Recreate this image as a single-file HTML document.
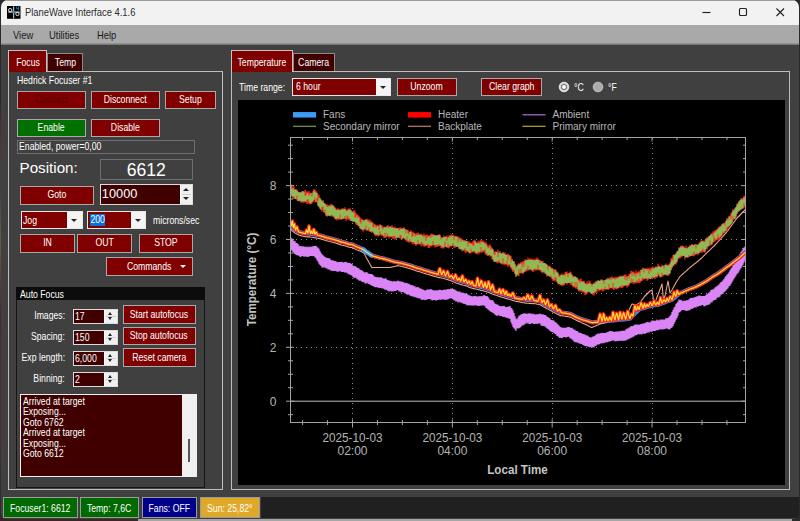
<!DOCTYPE html><html><head><meta charset="utf-8"><title>PlaneWave Interface 4.1.6</title><style>
*{box-sizing:border-box;margin:0;padding:0}
html,body{width:800px;height:521px;overflow:hidden;background:#2a2a2a}
body{font-family:"Liberation Sans",Arial,sans-serif;font-size:11px;color:#fff;position:relative}
.abs{position:absolute}
#win{position:absolute;left:1px;top:0;width:798px;height:519px;background:#404040;border-radius:7px 7px 5px 5px;overflow:hidden}
#title{position:absolute;left:0;top:0;width:100%;height:24.6px;background:#f3f2f2;color:#111}
#menu{position:absolute;left:0;top:24.6px;width:100%;height:20.4px;background:#a9a9a9;color:#1a1a1a}
.btn{position:absolute;background:#800000;border:1px solid #a9a9a9;padding-bottom:1.2px;color:#fff;text-align:center;display:flex;align-items:center;justify-content:center;white-space:nowrap}
.lbl{position:absolute;white-space:nowrap}
.tab{position:absolute;border:1px solid #bcbcbc;border-bottom:none;display:flex;align-items:center;justify-content:center;color:#fff}
.panel{position:absolute;border:1px solid #bdbdbd}
.num{position:absolute;background:#400000;border:1px solid #dcdcdc;color:#fff;white-space:nowrap}
.spin{position:absolute;right:0;top:0;bottom:0;background:#f0f0f0;border-left:1px solid #fff}
.spin:after{content:'';position:absolute;left:1px;right:1px;top:50%;height:1px;margin-top:-0.5px;background:#cfcfcf}
.combo{position:absolute;background:#800000;border:1px solid #e8e8e8;color:#fff;white-space:nowrap}
.dd{position:absolute;right:0;top:0;bottom:0;background:#f4f4f4}
.arr{position:absolute;width:0;height:0;border-left:3px solid transparent;border-right:3px solid transparent}
.up{border-bottom:3.5px solid #222}
.dn{border-top:3.5px solid #222}
.t{display:inline-block;transform:scaleX(0.79);transform-origin:50% 50%;white-space:nowrap}
.tl{display:inline-block;transform:scaleX(0.79);transform-origin:0 50%;white-space:nowrap}
.tr{display:inline-block;transform:scaleX(0.79);transform-origin:100% 50%;white-space:nowrap}
.sb{position:absolute;top:497px;height:21px;border:1px solid #9a9a9a;display:flex;align-items:center;justify-content:center;white-space:nowrap}
</style></head><body>
<div class="abs" style="left:0;top:0;width:3px;height:521px;background:linear-gradient(#2a2a2e 0,#2a2a2e 20%,#5a2a2a 24%,#3a4a3a 38%,#6a5a48 46%,#4a2a2a 60%,#503030 80%,#2a2a2a 100%)"></div>
<div class="abs" style="left:0;top:518px;width:140px;height:3px;background:#3a2626"></div>
<div class="abs" style="left:138px;top:519.4px;width:654px;height:1.6px;background:#a6a6a6"></div>
<div id="win">
<div id="title">
<div class="abs" style="left:0;top:0;width:100%;height:1px;background:#9a9a9a"></div>
<svg class="abs" style="left:6.1px;top:5.9px" width="13.5" height="12.8" viewBox="0 0 320 300" preserveAspectRatio="none"><rect width="320" height="300" fill="#000"/><g stroke="#fafafa" stroke-width="21" fill="none"><path d="M158 8V292M28 143H300"/><circle cx="76" cy="96" r="40"/><circle cx="248" cy="186" r="40"/></g><path d="M226 12V62H272M272 12V108" stroke="#1e9bf0" stroke-width="17" fill="none"/><circle cx="158" cy="141" r="30" fill="#2a8fe0"/></svg>
<div class="lbl" style="left:23.5px;top:5.8px;font-size:10.6px;color:#2c2c2c"><span class="tl" style="transform:scaleX(.887)">PlaneWave Interface 4.1.6</span></div>
<svg class="abs" style="left:700px;top:6px" width="90" height="12" viewBox="0 0 90 12" fill="none" stroke="#222" stroke-width="1.15"><path d="M1.5 6.5H9.5"/><rect x="38.5" y="2.5" width="7" height="7" rx="1"/><path d="M75.5 2.5l7.5 7.5M83 2.5l-7.5 7.5"/></svg>
</div>
<div id="menu">
<div class="lbl" style="left:12px;top:4.2px;font-size:10.6px"><span class="tl" style="transform:scaleX(.887)">View</span></div>
<div class="lbl" style="left:48px;top:4.2px;font-size:10.6px"><span class="tl" style="transform:scaleX(.887)">Utilities</span></div>
<div class="lbl" style="left:95.5px;top:4.2px;font-size:10.6px"><span class="tl" style="transform:scaleX(.887)">Help</span></div>
</div>
<div class="abs" style="left:0;top:43px;width:100%;height:2px;background:linear-gradient(#a0a0a0,#6a6a6a)"></div>
<div class="panel" style="left:7px;top:71px;width:215px;height:419px"></div>
<div class="tab" style="left:7px;top:50px;width:39px;height:22px;background:#800000;border-color:#c4c4c4"><span class="t">Focus</span></div>
<div class="tab" style="left:46px;top:52.5px;width:36px;height:18.5px;background:#400000;border-color:#8a8a8a"><span class="t">Temp</span></div>
<div class="lbl" style="left:15.5px;top:74px"><span class="tl">Hedrick Focuser #1</span></div>
<div class="btn" style="left:15.5px;top:90.5px;width:69px;height:18px;color:#5a0000"><span class="t">Connect</span></div>
<div class="btn" style="left:89.5px;top:90.5px;width:69px;height:18px;"><span class="t">Disconnect</span></div>
<div class="btn" style="left:164px;top:90.5px;width:51px;height:18px;"><span class="t">Setup</span></div>
<div class="btn" style="left:15.5px;top:119px;width:69px;height:18px;background:#007000"><span class="t">Enable</span></div>
<div class="btn" style="left:89.5px;top:119px;width:69px;height:18px;"><span class="t">Disable</span></div>
<div class="abs" style="left:15.5px;top:140px;width:178.5px;height:14px;border:1px solid #6e6e6e;padding:0 0 0 1.5px;line-height:11px;white-space:nowrap"><span class="tl">Enabled, power=0,00</span></div>
<div class="lbl" style="left:18.5px;top:158.5px;font-size:15.2px">Position:</div>
<div class="abs" style="left:98.5px;top:158.5px;width:93.5px;height:21.5px;border:1px solid #6e6e6e;text-align:center;font-size:17.6px;line-height:21px">6612</div>
<div class="btn" style="left:19px;top:185.5px;width:73.5px;height:19px;"><span class="t">Goto</span></div>
<div class="num" style="left:98.5px;top:183.5px;width:93.5px;height:21px;font-size:12.8px;line-height:18.5px;padding-left:1.3px">10000<div class="spin" style="width:12.5px"><div class="arr up" style="left:2.65px;top:21%;border-left-width:3.1px;border-right-width:3.1px;border-bottom-width:3.4px"></div><div class="arr dn" style="left:2.65px;bottom:21%;border-left-width:3.1px;border-right-width:3.1px;border-top-width:3.4px"></div></div></div>
<div class="combo" style="left:19.5px;top:211px;width:62px;height:17.5px;line-height:16.6px;padding-left:1.5px"><span class="tl">Jog</span><div class="dd" style="width:14.5px"><div class="arr dn" style="left:4.25px;top:42%"></div></div></div>
<div class="combo" style="left:86px;top:211px;width:59px;height:17.5px;line-height:16.6px;padding-left:2px"><span class="tl"><span style="background:#0a6fd8;display:inline-block;height:11.6px;line-height:11.6px;padding:0 0.5px;vertical-align:middle;margin-top:-2.5px">200</span></span><div class="dd" style="width:14.5px"><div class="arr dn" style="left:4.25px;top:42%"></div></div></div>
<div class="lbl" style="left:151.5px;top:214px"><span class="tl">microns/sec</span></div>
<div class="btn" style="left:19px;top:233.5px;width:54.5px;height:19px;"><span class="t">IN</span></div>
<div class="btn" style="left:76px;top:233.5px;width:55px;height:19px;"><span class="t">OUT</span></div>
<div class="btn" style="left:138px;top:233.5px;width:54px;height:19px;"><span class="t">STOP</span></div>
<div class="btn" style="left:105px;top:257px;width:86.5px;height:18.5px"><span class="t">Commands</span><span class="arr dn" style="left:72.5px;top:6.5px;border-top-color:#fff;border-left-width:3px;border-right-width:3px;border-top-width:3.5px"></span></div>
<div class="abs" style="left:15px;top:286.5px;width:189px;height:201px;border:1.5px solid #161616"></div>
<div class="abs" style="left:15px;top:286.5px;width:189px;height:13.5px;background:#0c0c0c;padding:1.5px 0 0 3.5px;white-space:nowrap"><span class="tl">Auto Focus</span></div>
<div class="lbl" style="left:9px;width:55px;text-align:right;top:309.3px"><span class="tr">Images:</span></div>
<div class="num" style="left:71.5px;top:308.5px;width:45px;height:15.5px;line-height:12px;padding-left:1.5px"><span class="tl">17</span><div class="spin" style="width:13px"><div class="arr up" style="left:3.4px;top:21%;border-left-width:2.6px;border-right-width:2.6px;border-bottom-width:3px"></div><div class="arr dn" style="left:3.4px;bottom:21%;border-left-width:2.6px;border-right-width:2.6px;border-top-width:3px"></div></div></div>
<div class="btn" style="left:121.5px;top:305px;width:73px;height:18.5px;"><span class="t">Start autofocus</span></div>
<div class="lbl" style="left:9px;width:55px;text-align:right;top:330.3px"><span class="tr">Spacing:</span></div>
<div class="num" style="left:71.5px;top:329.5px;width:45px;height:15.5px;line-height:12px;padding-left:1.5px"><span class="tl">150</span><div class="spin" style="width:13px"><div class="arr up" style="left:3.4px;top:21%;border-left-width:2.6px;border-right-width:2.6px;border-bottom-width:3px"></div><div class="arr dn" style="left:3.4px;bottom:21%;border-left-width:2.6px;border-right-width:2.6px;border-top-width:3px"></div></div></div>
<div class="btn" style="left:121.5px;top:326.7px;width:73px;height:18.5px;"><span class="t">Stop autofocus</span></div>
<div class="lbl" style="left:9px;width:55px;text-align:right;top:351.3px"><span class="tr">Exp length:</span></div>
<div class="num" style="left:71.5px;top:350.5px;width:45px;height:15.5px;line-height:12px;padding-left:1.5px"><span class="tl">6,000</span><div class="spin" style="width:13px"><div class="arr up" style="left:3.4px;top:21%;border-left-width:2.6px;border-right-width:2.6px;border-bottom-width:3px"></div><div class="arr dn" style="left:3.4px;bottom:21%;border-left-width:2.6px;border-right-width:2.6px;border-top-width:3px"></div></div></div>
<div class="btn" style="left:121.5px;top:348.2px;width:73px;height:18.5px;"><span class="t">Reset camera</span></div>
<div class="lbl" style="left:9px;width:55px;text-align:right;top:372.3px"><span class="tr">Binning:</span></div>
<div class="num" style="left:71.5px;top:371.5px;width:45px;height:15.5px;line-height:12px;padding-left:1.5px"><span class="tl">2</span><div class="spin" style="width:13px"><div class="arr up" style="left:3.4px;top:21%;border-left-width:2.6px;border-right-width:2.6px;border-bottom-width:3px"></div><div class="arr dn" style="left:3.4px;bottom:21%;border-left-width:2.6px;border-right-width:2.6px;border-top-width:3px"></div></div></div>
<div class="abs" style="left:19px;top:393.5px;width:177px;height:83.5px;background:#400000;border:1px solid #f0f0f0;line-height:10.55px;padding:1.2px 0 0 1.5px"><div><span class="tl">Arrived at target</span></div><div><span class="tl">Exposing...</span></div><div><span class="tl">Goto 6762</span></div><div><span class="tl">Arrived at target</span></div><div><span class="tl">Exposing...</span></div><div><span class="tl">Goto 6612</span></div><div class="abs" style="right:0;top:0;bottom:0;width:14px;background:#f0f0f0"><div class="abs" style="left:6px;top:44px;width:1.5px;height:23px;background:#555"></div></div></div>
<div class="panel" style="left:229.5px;top:71px;width:559.5px;height:419px"></div>
<div class="tab" style="left:229.5px;top:50px;width:62.5px;height:22px;background:#800000;border-color:#c4c4c4"><span class="t">Temperature</span></div>
<div class="tab" style="left:292px;top:52.5px;width:41.5px;height:18.5px;background:#400000;border-color:#8a8a8a"><span class="t">Camera</span></div>
<div class="lbl" style="left:237.5px;top:81px"><span class="tl">Time range:</span></div>
<div class="combo" style="left:291px;top:78px;width:99px;height:17.5px;line-height:15.5px;padding-left:3px"><span class="tl">6 hour</span><div class="dd" style="width:14.5px"><div class="arr dn" style="left:4.25px;top:42%"></div></div></div>
<div class="btn" style="left:395.5px;top:78px;width:60.5px;height:18px;"><span class="t">Unzoom</span></div>
<div class="btn" style="left:480px;top:78px;width:61px;height:18px;"><span class="t">Clear graph</span></div>
<svg class="abs" style="left:557px;top:81px" width="12" height="12" viewBox="0 0 12 12"><circle cx="6" cy="6" r="4.8" fill="#d6d6d6" stroke="#f2f2f2" stroke-width="0.9"/><circle cx="6" cy="6" r="2.7" fill="none" stroke="#777" stroke-width="1"/><circle cx="6" cy="6" r="1.4" fill="#fff"/></svg>
<div class="lbl" style="left:572.5px;top:81px"><span class="tl">°C</span></div>
<svg class="abs" style="left:590.8px;top:81px" width="12" height="12" viewBox="0 0 12 12"><circle cx="6" cy="6" r="4.8" fill="#acacac" stroke="#c8c8c8" stroke-width="0.9"/></svg>
<div class="lbl" style="left:607px;top:81px"><span class="tl">°F</span></div>
<svg width="547" height="385" viewBox="0 0 547 385" style="position:absolute;left:237px;top:100px;display:block" font-family="Liberation Sans, Arial, sans-serif">
<rect width="547" height="385" fill="#000"/>
<defs><clipPath id="cp"><rect x="52.5" y="37.5" width="455.0" height="285.0"/></clipPath></defs>
<line x1="52.5" x2="507.5" y1="247.30" y2="247.30" stroke="#8c8c8c" stroke-width="1" stroke-dasharray="1 4" shape-rendering="crispEdges"/>
<line x1="52.5" x2="507.5" y1="193.40" y2="193.40" stroke="#8c8c8c" stroke-width="1" stroke-dasharray="1 4" shape-rendering="crispEdges"/>
<line x1="52.5" x2="507.5" y1="139.50" y2="139.50" stroke="#8c8c8c" stroke-width="1" stroke-dasharray="1 4" shape-rendering="crispEdges"/>
<line x1="52.5" x2="507.5" y1="85.60" y2="85.60" stroke="#8c8c8c" stroke-width="1" stroke-dasharray="1 4" shape-rendering="crispEdges"/>
<line x1="114.50" x2="114.50" y1="37.5" y2="322.5" stroke="#8c8c8c" stroke-width="1" stroke-dasharray="1 4" shape-rendering="crispEdges"/>
<line x1="214.35" x2="214.35" y1="37.5" y2="322.5" stroke="#8c8c8c" stroke-width="1" stroke-dasharray="1 4" shape-rendering="crispEdges"/>
<line x1="314.20" x2="314.20" y1="37.5" y2="322.5" stroke="#8c8c8c" stroke-width="1" stroke-dasharray="1 4" shape-rendering="crispEdges"/>
<line x1="414.05" x2="414.05" y1="37.5" y2="322.5" stroke="#8c8c8c" stroke-width="1" stroke-dasharray="1 4" shape-rendering="crispEdges"/>
<line x1="52.5" x2="507.5" y1="301.2" y2="301.2" stroke="#bdbdbd" stroke-width="1"/>
<g clip-path="url(#cp)" fill="none">
<path d="M52.0 137.0V148.1M53.0 137.6V149.7M54.0 138.6V150.8M55.0 139.2V152.1M56.0 141.2V153.6M57.0 141.0V154.1M58.0 143.0V154.8M59.0 142.9V155.2M60.0 144.1V155.4M61.0 145.4V155.8M62.0 146.3V156.7M63.0 146.1V156.9M64.0 146.4V155.9M65.0 146.3V155.9M66.0 146.4V156.9M67.0 147.1V156.2M68.0 146.5V156.5M69.0 147.3V157.0M70.0 146.5V156.7M71.0 147.2V156.7M72.0 146.4V156.1M73.0 146.9V155.9M74.0 146.6V156.1M75.0 146.2V156.2M76.0 145.9V156.1M77.0 146.0V157.5M78.0 145.7V158.2M79.0 146.7V160.3M80.0 147.8V161.8M81.0 148.8V163.8M82.0 151.0V165.1M83.0 152.7V166.0M84.0 154.3V167.8M85.0 155.2V167.2M86.0 156.2V167.5M87.0 157.1V167.5M88.0 157.6V168.4M89.0 157.9V168.2M90.0 158.0V169.4M91.0 158.4V169.4M92.0 158.4V169.7M93.0 159.9V170.9M94.0 160.5V170.6M95.0 160.3V171.1M96.0 161.1V171.1M97.0 161.0V170.8M98.0 161.3V171.1M99.0 162.3V171.8M100.0 162.0V171.7M101.0 161.9V171.4M102.0 161.9V170.8M103.0 161.9V171.7M104.0 161.7V171.9M105.0 162.5V172.1M106.0 162.3V172.1M107.0 161.9V172.7M108.0 161.7V172.3M109.0 162.7V172.9M110.0 162.5V173.8M111.0 163.0V174.3M112.0 163.1V174.7M113.0 163.7V175.1M114.0 164.1V175.7M115.0 165.8V177.1M116.0 165.7V178.2M117.0 166.3V177.6M118.0 166.8V178.1M119.0 167.6V179.2M120.0 167.9V179.6M121.0 168.6V180.6M122.0 169.8V180.7M123.0 169.9V180.8M124.0 170.5V182.1M125.0 171.3V182.2M126.0 171.9V182.0M127.0 172.9V183.4M128.0 171.9V183.4M129.0 172.3V182.8M130.0 173.5V183.8M131.0 173.7V183.9M132.0 174.0V184.5M133.0 174.0V185.3M134.0 174.0V185.7M135.0 175.1V186.1M136.0 176.3V186.7M137.0 176.8V187.2M138.0 177.0V187.2M139.0 177.4V187.3M140.0 176.9V187.5M141.0 177.5V187.9M142.0 177.4V188.0M143.0 177.1V187.7M144.0 178.1V188.5M145.0 178.6V188.3M146.0 178.6V188.9M147.0 178.6V189.8M148.0 178.2V189.8M149.0 179.8V190.1M150.0 179.9V190.9M151.0 180.8V191.4M152.0 180.6V190.8M153.0 181.1V191.5M154.0 181.4V191.2M155.0 181.6V191.4M156.0 181.1V190.7M157.0 181.5V190.9M158.0 181.3V191.1M159.0 181.3V190.0M160.0 180.6V190.3M161.0 181.0V191.4M162.0 181.8V191.3M163.0 181.3V192.4M164.0 181.9V192.2M165.0 181.8V192.0M166.0 182.5V192.6M167.0 183.2V193.6M168.0 182.7V193.8M169.0 183.1V194.7M170.0 183.7V194.2M171.0 183.7V194.8M172.0 184.6V195.5M173.0 185.2V196.1M174.0 185.1V196.4M175.0 185.6V196.2M176.0 186.3V197.3M177.0 186.2V196.7M178.0 187.4V197.5M179.0 187.1V197.8M180.0 187.0V197.9M181.0 187.7V198.6M182.0 188.6V198.2M183.0 188.5V199.6M184.0 189.3V200.0M185.0 189.6V199.8M186.0 189.9V199.6M187.0 190.7V200.3M188.0 190.3V199.7M189.0 189.6V199.8M190.0 189.4V199.0M191.0 189.6V198.9M192.0 189.5V199.2M193.0 188.9V199.4M194.0 189.7V200.6M195.0 190.3V200.3M196.0 190.3V200.1M197.0 190.7V200.1M198.0 190.3V200.8M199.0 190.3V200.0M200.0 190.5V200.1M201.0 189.7V199.5M202.0 189.8V199.7M203.0 190.1V199.7M204.0 190.4V199.4M205.0 190.1V199.4M206.0 189.5V199.2M207.0 189.9V199.9M208.0 189.4V199.5M209.0 189.5V199.7M210.0 188.9V199.3M211.0 189.6V198.8M212.0 189.1V198.4M213.0 188.6V198.2M214.0 188.9V198.5M215.0 189.1V199.2M216.0 189.3V200.5M217.0 189.8V200.5M218.0 190.5V201.6M219.0 190.9V201.2M220.0 191.7V202.4M221.0 191.4V201.7M222.0 191.5V202.3M223.0 192.5V202.8M224.0 192.8V202.7M225.0 192.6V203.7M226.0 193.3V203.8M227.0 193.6V204.1M228.0 193.3V204.5M229.0 193.9V205.2M230.0 194.8V205.4M231.0 195.3V205.3M232.0 195.6V205.3M233.0 196.1V205.7M234.0 196.4V205.1M235.0 196.2V205.8M236.0 196.1V205.5M237.0 195.8V205.3M238.0 196.3V205.2M239.0 196.6V205.7M240.0 196.2V205.8M241.0 196.4V206.0M242.0 196.1V205.6M243.0 196.2V205.8M244.0 196.2V205.6M245.0 195.7V205.2M246.0 195.0V205.6M247.0 195.6V206.2M248.0 196.0V208.1M249.0 196.0V208.5M250.0 196.7V209.4M251.0 198.4V210.2M252.0 199.8V211.0M253.0 200.2V212.0M254.0 199.9V212.3M255.0 200.6V213.1M256.0 202.2V213.5M257.0 203.8V214.7M258.0 203.8V215.3M259.0 204.7V216.0M260.0 204.5V214.9M261.0 205.7V215.4M262.0 206.2V215.9M263.0 206.0V215.9M264.0 206.4V216.3M265.0 206.0V216.9M266.0 205.8V216.8M267.0 206.6V217.2M268.0 207.2V217.7M269.0 207.0V217.8M270.0 206.6V218.3M271.0 206.8V218.6M272.0 206.1V219.1M273.0 207.8V222.2M274.0 208.6V224.4M275.0 210.6V226.9M276.0 213.0V228.3M277.0 216.3V229.6M278.0 218.6V230.9M279.0 219.3V228.6M280.0 217.6V228.5M281.0 215.8V228.3M282.0 215.2V227.8M283.0 214.5V226.7M284.0 214.1V225.4M285.0 213.8V225.5M286.0 213.3V224.8M287.0 213.6V224.2M288.0 213.4V222.7M289.0 214.1V223.7M290.0 213.6V222.7M291.0 213.2V223.9M292.0 213.5V224.1M293.0 213.7V223.7M294.0 213.6V223.2M295.0 214.3V223.4M296.0 213.7V223.9M297.0 214.2V224.0M298.0 214.9V223.4M299.0 214.1V224.1M300.0 214.4V223.6M301.0 213.9V223.6M302.0 213.6V223.4M303.0 213.9V225.2M304.0 214.8V225.9M305.0 214.3V225.8M306.0 214.7V226.3M307.0 215.0V226.6M308.0 215.6V227.6M309.0 216.8V228.2M310.0 217.0V229.3M311.0 217.9V229.5M312.0 218.5V231.1M313.0 220.0V231.6M314.0 219.9V232.0M315.0 220.6V232.3M316.0 220.6V232.9M317.0 222.1V234.1M318.0 222.6V234.4M319.0 223.5V235.9M320.0 224.4V236.5M321.0 225.6V237.6M322.0 226.8V238.1M323.0 227.3V237.8M324.0 227.5V238.2M325.0 227.9V237.6M326.0 227.5V236.9M327.0 228.1V236.9M328.0 227.7V237.8M329.0 227.3V237.1M330.0 227.0V236.8M331.0 226.9V236.8M332.0 227.5V238.2M333.0 228.0V238.6M334.0 227.8V239.2M335.0 228.8V240.5M336.0 229.7V241.6M337.0 229.8V242.2M338.0 231.0V242.2M339.0 231.0V242.4M340.0 231.7V242.8M341.0 232.8V243.4M342.0 232.8V243.6M343.0 232.9V244.0M344.0 233.8V244.2M345.0 234.1V244.9M346.0 234.3V245.6M347.0 234.5V246.0M348.0 235.2V246.2M349.0 235.5V246.2M350.0 235.8V246.4M351.0 236.9V247.0M352.0 237.2V247.2M353.0 237.8V246.7M354.0 237.0V247.6M355.0 236.5V247.3M356.0 236.3V247.4M357.0 235.7V246.0M358.0 234.6V246.0M359.0 234.3V244.7M360.0 233.5V244.6M361.0 233.4V244.4M362.0 233.8V243.9M363.0 233.1V243.0M364.0 232.8V243.6M365.0 233.1V242.9M366.0 232.9V243.2M367.0 233.1V242.5M368.0 232.7V242.6M369.0 232.3V242.3M370.0 231.7V242.0M371.0 231.4V241.4M372.0 231.0V241.6M373.0 231.0V240.9M374.0 231.6V240.7M375.0 231.2V240.6M376.0 231.9V240.6M377.0 231.9V241.6M378.0 231.3V240.9M379.0 231.9V241.2M380.0 231.2V240.7M381.0 231.2V240.9M382.0 231.4V240.7M383.0 230.7V240.8M384.0 231.1V240.5M385.0 230.5V240.9M386.0 230.9V240.4M387.0 230.5V240.8M388.0 229.2V240.4M389.0 228.5V239.5M390.0 228.5V239.4M391.0 227.6V238.7M392.0 227.3V238.4M393.0 225.9V237.8M394.0 226.2V237.4M395.0 226.1V236.7M396.0 225.3V236.5M397.0 224.6V235.5M398.0 224.5V235.3M399.0 224.8V235.1M400.0 224.4V233.9M401.0 224.7V234.3M402.0 224.6V234.5M403.0 223.9V234.0M404.0 223.8V234.4M405.0 223.4V233.6M406.0 223.5V233.8M407.0 222.8V234.1M408.0 222.8V233.1M409.0 221.9V232.8M410.0 221.8V232.4M411.0 222.4V232.6M412.0 222.2V231.6M413.0 221.6V231.8M414.0 220.6V231.8M415.0 220.8V231.1M416.0 220.6V231.0M417.0 221.1V231.0M418.0 220.4V230.4M419.0 219.5V229.9M420.0 220.2V230.3M421.0 220.5V229.8M422.0 219.6V229.2M423.0 219.6V229.3M424.0 219.5V229.5M425.0 219.4V229.4M426.0 219.5V228.9M427.0 219.5V229.2M428.0 218.1V228.4M429.0 218.4V228.6M430.0 218.0V228.9M431.0 217.2V229.5M432.0 216.1V229.3M433.0 214.5V228.1M434.0 212.1V227.4M435.0 209.9V226.2M436.0 207.8V224.0M437.0 206.4V221.9M438.0 204.1V219.7M439.0 202.7V217.9M440.0 201.5V215.8M441.0 199.5V212.5M442.0 199.9V212.2M443.0 199.8V210.9M444.0 200.8V209.9M445.0 201.3V210.1M446.0 200.4V209.9M447.0 200.9V210.5M448.0 200.6V210.7M449.0 200.1V210.9M450.0 200.4V210.3M451.0 199.2V210.4M452.0 198.4V209.9M453.0 197.8V208.8M454.0 198.1V209.0M455.0 197.8V208.2M456.0 197.8V207.8M457.0 197.0V207.0M458.0 196.8V207.7M459.0 196.2V206.3M460.0 196.3V206.7M461.0 195.6V206.0M462.0 195.4V205.8M463.0 196.2V205.7M464.0 196.1V205.1M465.0 196.0V205.1M466.0 196.1V206.4M467.0 196.1V206.0M468.0 194.7V205.5M469.0 194.2V205.1M470.0 193.6V204.7M471.0 192.4V204.8M472.0 191.8V203.8M473.0 190.1V202.3M474.0 189.5V202.5M475.0 189.4V201.1M476.0 188.8V200.0M477.0 187.5V199.9M478.0 186.7V199.4M479.0 186.2V197.8M480.0 185.2V197.6M481.0 184.4V197.2M482.0 183.2V196.4M483.0 182.0V194.7M484.0 181.6V194.3M485.0 180.2V193.8M486.0 179.1V192.3M487.0 177.3V191.4M488.0 175.9V190.4M489.0 174.8V189.3M490.0 173.7V188.2M491.0 172.2V186.3M492.0 170.2V185.7M493.0 168.4V184.0M494.0 167.4V182.2M495.0 165.3V180.5M496.0 164.4V178.8M497.0 162.4V177.3M498.0 160.3V175.7M499.0 158.6V174.1M500.0 157.8V172.9M501.0 155.8V171.4M502.0 154.1V169.5M503.0 152.0V168.3M504.0 150.4V166.5M505.0 148.0V164.7M506.0 147.6V162.4M507.0 146.6V160.2M508.0 145.2V158.0" stroke="#da84f6" stroke-width="1.25"/>
<polyline points="52.0,125.9 52.5,126.4 53.0,126.8 53.5,127.2 54.0,127.7 54.5,128.1 55.0,128.5 55.5,128.8 56.0,129.2 56.5,129.6 57.0,130.1 57.5,130.4 58.0,130.6 58.5,130.9 59.0,131.1 59.5,131.3 60.0,131.5 60.5,131.8 61.0,132.0 61.5,132.2 62.0,132.4 62.5,132.5 63.0,132.6 63.5,132.7 64.0,132.9 64.5,133.0 65.0,133.1 65.5,133.3 66.0,133.4 66.5,133.5 67.0,133.6 67.5,133.7 68.0,133.8 68.5,133.8 69.0,133.9 69.5,133.9 70.0,133.9 70.5,133.9 71.0,133.9 71.5,133.9 72.0,133.9 72.5,134.1 73.0,134.2 73.5,134.2 74.0,134.2 74.5,134.3 75.0,134.4 75.5,134.5 76.0,134.7 76.5,134.8 77.0,134.9 77.5,134.9 78.0,134.9 78.5,135.0 79.0,135.2 79.5,135.3 80.0,135.4 80.5,135.5 81.0,135.5 81.5,135.6 82.0,135.6 82.5,135.8 83.0,136.0 83.5,136.1 84.0,136.2 84.5,136.4 85.0,136.5 85.5,136.7 86.0,136.9 86.5,137.1 87.0,137.3 87.5,137.4 88.0,137.6 88.5,137.7 89.0,137.9 89.5,138.0 90.0,138.0 90.5,138.2 91.0,138.3 91.5,138.4 92.0,138.6 92.5,138.7 93.0,138.8 93.5,138.9 94.0,139.0 94.5,139.2 95.0,139.4 95.5,139.5 96.0,139.6 96.5,139.7 97.0,139.9 97.5,140.0 98.0,140.2 98.5,140.3 99.0,140.5 99.5,140.6 100.0,140.8 100.5,141.0 101.0,141.3 101.5,141.4 102.0,141.6 102.5,141.8 103.0,141.9 103.5,142.1 104.0,142.2 104.5,142.3 105.0,142.4 105.5,142.5 106.0,142.6 106.5,142.7 107.0,142.8 107.5,143.0 108.0,143.1 108.5,143.3 109.0,143.5 109.5,143.7 110.0,143.9 110.5,144.1 111.0,144.3 111.5,144.3 112.0,144.4 112.5,144.4 113.0,144.4 113.5,144.5 114.0,144.5 114.5,144.8 115.0,145.0 115.5,145.2 116.0,145.5 116.5,145.7 117.0,146.0 117.5,146.2 118.0,146.5 118.5,146.7 119.0,147.0 119.5,147.2 120.0,147.3 120.5,147.5 121.0,147.6 121.5,147.9 122.0,148.1 122.5,148.3 123.0,148.6 123.5,148.8 124.0,149.0 124.5,149.2 125.0,149.5 125.5,149.8 126.0,150.0 126.5,150.5 127.0,150.9 127.5,151.3 128.0,151.7 128.5,152.1 129.0,152.4 129.5,152.8 130.0,153.1 130.5,153.4 131.0,153.8 131.5,154.1 132.0,154.5 132.5,154.8 133.0,155.1 133.5,155.4 134.0,155.8 134.5,156.0 135.0,156.2 135.5,156.2 136.0,156.3 136.5,156.4 137.0,156.6 137.5,156.8 138.0,156.9 138.5,157.1 139.0,157.3 139.5,157.3 140.0,157.4 140.5,157.6 141.0,157.8 141.5,158.0 142.0,158.2 142.5,158.2 143.0,158.3 143.5,158.3 144.0,158.3 144.5,158.5 145.0,158.8 145.5,158.8 146.0,158.9 146.5,159.0 147.0,159.1 147.5,159.3 148.0,159.5 148.5,159.6 149.0,159.8 149.5,159.9 150.0,160.0 150.5,160.2 151.0,160.3 151.5,160.5 152.0,160.6 152.5,160.8 153.0,161.0 153.5,161.2 154.0,161.3 154.5,161.5 155.0,161.6 155.5,161.7 156.0,161.8 156.5,162.0 157.0,162.2 157.5,162.2 158.0,162.3 158.5,162.4 159.0,162.5 159.5,162.6 160.0,162.6 160.5,162.8 161.0,163.0 161.5,163.0 162.0,163.0 162.5,163.1 163.0,163.2 163.5,163.3 164.0,163.4 164.5,163.6 165.0,163.7 165.5,163.9 166.0,164.0 166.5,164.1 167.0,164.2 167.5,164.4 168.0,164.5 168.5,164.7 169.0,164.9 169.5,165.0 170.0,165.1 170.5,165.2 171.0,165.4 171.5,165.5 172.0,165.7 172.5,165.8 173.0,166.0 173.5,166.1 174.0,166.3 174.5,166.5 175.0,166.6 175.5,166.9 176.0,167.1 176.5,167.3 177.0,167.5 177.5,167.7 178.0,167.8 178.5,167.9 179.0,168.1 179.5,168.2 180.0,168.4 180.5,168.5 181.0,168.6 181.5,168.7 182.0,168.8 182.5,169.0 183.0,169.2 183.5,169.3 184.0,169.5 184.5,169.7 185.0,169.9 185.5,170.1 186.0,170.2 186.5,170.4 187.0,170.5 187.5,170.7 188.0,170.9 188.5,171.0 189.0,171.2 189.5,171.2 190.0,171.2 190.5,171.5 191.0,171.7 191.5,171.9 192.0,172.0 192.5,172.2 193.0,172.4 193.5,172.5 194.0,172.6 194.5,172.8 195.0,173.0 195.5,173.1 196.0,173.2 196.5,173.4 197.0,173.6 197.5,173.7 198.0,173.8 198.5,173.9 199.0,174.0 199.5,174.2 200.0,174.4 200.5,174.5 201.0,174.6 201.5,174.6 202.0,174.7 202.5,174.8 203.0,174.9 203.5,175.0 204.0,175.2 204.5,175.2 205.0,175.3 205.5,175.4 206.0,175.6 206.5,175.7 207.0,175.8 207.5,176.0 208.0,176.2 208.5,176.3 209.0,176.5 209.5,176.6 210.0,176.8 210.5,176.9 211.0,177.1 211.5,177.2 212.0,177.4 212.5,177.6 213.0,177.8 213.5,178.0 214.0,178.2 214.5,178.5 215.0,178.7 215.5,178.9 216.0,179.1 216.5,179.3 217.0,179.5 217.5,179.7 218.0,179.9 218.5,180.1 219.0,180.2 219.5,180.4 220.0,180.5 220.5,180.7 221.0,180.9 221.5,181.1 222.0,181.3 222.5,181.5 223.0,181.6 223.5,181.7 224.0,181.8 224.5,182.0 225.0,182.2 225.5,182.2 226.0,182.2 226.5,182.4 227.0,182.5 227.5,182.6 228.0,182.7 228.5,183.0 229.0,183.3 229.5,183.4 230.0,183.6 230.5,184.0 231.0,184.3 231.5,184.4 232.0,184.6 232.5,184.7 233.0,184.9 233.5,185.0 234.0,185.2 234.5,185.3 235.0,185.5 235.5,185.6 236.0,185.6 236.5,185.8 237.0,185.9 237.5,186.0 238.0,186.0 238.5,186.2 239.0,186.3 239.5,186.4 240.0,186.6 240.5,186.7 241.0,186.8 241.5,186.9 242.0,187.1 242.5,187.3 243.0,187.5 243.5,187.5 244.0,187.6 244.5,187.7 245.0,187.8 245.5,187.9 246.0,188.0 246.5,188.1 247.0,188.2 247.5,188.4 248.0,188.5 248.5,188.7 249.0,188.9 249.5,189.1 250.0,189.2 250.5,189.4 251.0,189.6 251.5,189.8 252.0,190.0 252.5,190.2 253.0,190.4 253.5,190.7 254.0,190.9 254.5,191.1 255.0,191.3 255.5,191.5 256.0,191.6 256.5,191.7 257.0,191.9 257.5,192.0 258.0,192.2 258.5,192.3 259.0,192.5 259.5,192.7 260.0,192.9 260.5,193.1 261.0,193.2 261.5,193.4 262.0,193.6 262.5,193.8 263.0,194.0 263.5,194.1 264.0,194.2 264.5,194.3 265.0,194.5 265.5,194.6 266.0,194.8 266.5,195.0 267.0,195.2 267.5,195.3 268.0,195.5 268.5,195.6 269.0,195.8 269.5,195.9 270.0,196.0 270.5,196.2 271.0,196.3 271.5,196.4 272.0,196.5 272.5,196.7 273.0,196.8 273.5,196.9 274.0,197.1 274.5,197.2 275.0,197.4 275.5,197.6 276.0,197.7 276.5,197.9 277.0,198.1 277.5,198.2 278.0,198.2 278.5,198.4 279.0,198.5 279.5,198.6 280.0,198.7 280.5,198.8 281.0,198.9 281.5,198.9 282.0,199.0 282.5,199.1 283.0,199.3 283.5,199.4 284.0,199.5 284.5,199.6 285.0,199.7 285.5,199.7 286.0,199.8 286.5,199.9 287.0,200.0 287.5,200.0 288.0,200.1 288.5,200.1 289.0,200.2 289.5,200.2 290.0,200.2 290.5,200.3 291.0,200.4 291.5,200.4 292.0,200.4 292.5,200.5 293.0,200.6 293.5,200.5 294.0,200.5 294.5,200.5 295.0,200.6 295.5,200.6 296.0,200.5 296.5,200.7 297.0,200.8 297.5,200.8 298.0,200.7 298.5,200.9 299.0,201.2 299.5,201.2 300.0,201.2 300.5,201.3 301.0,201.5 301.5,201.6 302.0,201.6 302.5,201.9 303.0,202.3 303.5,202.5 304.0,202.8 304.5,203.2 305.0,203.6 305.5,203.9 306.0,204.1 306.5,204.3 307.0,204.5 307.5,204.8 308.0,205.2 308.5,205.5 309.0,205.7 309.5,205.9 310.0,206.1 310.5,206.3 311.0,206.6 311.5,207.0 312.0,207.3 312.5,207.5 313.0,207.8 313.5,208.1 314.0,208.4 314.5,208.7 315.0,209.0 315.5,209.2 316.0,209.4 316.5,209.7 317.0,210.0 317.5,210.2 318.0,210.5 318.5,210.7 319.0,210.9 319.5,211.2 320.0,211.4 320.5,211.7 321.0,212.0 321.5,212.3 322.0,212.6 322.5,212.6 323.0,212.7 323.5,212.8 324.0,212.8 324.5,212.9 325.0,213.0 325.5,213.0 326.0,213.0 326.5,213.0 327.0,213.1 327.5,213.2 328.0,213.4 328.5,213.4 329.0,213.5 329.5,213.6 330.0,213.7 330.5,213.8 331.0,213.9 331.5,214.0 332.0,214.1 332.5,214.3 333.0,214.5 333.5,214.8 334.0,215.0 334.5,215.3 335.0,215.6 335.5,215.8 336.0,216.1 336.5,216.4 337.0,216.6 337.5,216.9 338.0,217.1 338.5,217.4 339.0,217.6 339.5,217.8 340.0,218.0 340.5,218.2 341.0,218.4 341.5,218.6 342.0,218.8 342.5,219.0 343.0,219.2 343.5,219.3 344.0,219.5 344.5,219.7 345.0,219.9 345.5,220.0 346.0,220.2 346.5,220.3 347.0,220.5 347.5,220.6 348.0,220.7 348.5,220.8 349.0,221.0 349.5,221.1 350.0,221.3 350.5,221.5 351.0,221.7 351.5,221.9 352.0,222.0 352.5,222.2 353.0,222.4 353.5,222.5 354.0,222.6 354.5,222.6 355.0,222.6 355.5,222.6 356.0,222.5 356.5,222.4 357.0,222.4 357.5,222.4 358.0,222.4 358.5,222.4 359.0,222.4 359.5,222.3 360.0,222.2 360.5,222.2 361.0,222.2 361.5,222.2 362.0,222.2 362.5,222.2 363.0,222.1 363.5,222.0 364.0,222.0 364.5,222.0 365.0,222.0 365.5,221.9 366.0,221.8 366.5,221.7 367.0,221.6 367.5,221.5 368.0,221.5 368.5,221.4 369.0,221.3 369.5,221.3 370.0,221.2 370.5,221.1 371.0,221.1 371.5,221.1 372.0,221.1 372.5,221.1 373.0,221.0 373.5,221.0 374.0,220.9 374.5,220.9 375.0,220.8 375.5,220.8 376.0,220.8 376.5,220.7 377.0,220.6 377.5,220.5 378.0,220.4 378.5,220.4 379.0,220.3 379.5,220.3 380.0,220.2 380.5,220.1 381.0,220.0 381.5,220.0 382.0,219.9 382.5,219.9 383.0,219.9 383.5,219.9 384.0,219.9 384.5,219.9 385.0,219.8 385.5,219.8 386.0,219.8 386.5,219.7 387.0,219.7 387.5,219.6 388.0,219.5 388.5,219.5 389.0,219.4 389.5,219.3 390.0,219.2 390.5,219.1 391.0,219.0 391.5,219.0 392.0,219.0 392.5,218.4 393.0,217.8 393.5,217.3 394.0,216.8 394.5,216.3 395.0,215.9 395.5,215.4 396.0,214.8 396.5,214.3 397.0,213.7 397.5,213.3 398.0,212.9 398.5,212.4 399.0,212.0 399.5,211.4 400.0,210.8 400.5,210.4 401.0,210.0 401.5,209.6 402.0,209.1 402.5,209.0 403.0,208.9 403.5,208.8 404.0,208.7 404.5,208.7 405.0,208.6 405.5,208.5 406.0,208.3 406.5,208.2 407.0,208.0 407.5,207.8 408.0,207.6 408.5,207.4 409.0,207.2 409.5,207.1 410.0,206.9 410.5,206.8 411.0,206.7 411.5,206.6 412.0,206.5 412.5,206.4 413.0,206.3 413.5,206.2 414.0,206.1 414.5,205.9 415.0,205.8 415.5,205.7 416.0,205.6 416.5,205.6 417.0,205.5 417.5,205.5 418.0,205.4 418.5,205.4 419.0,205.4 419.5,205.3 420.0,205.2 420.5,205.0 421.0,204.7 421.5,204.7 422.0,204.6 422.5,204.4 423.0,204.1 423.5,203.9 424.0,203.6 424.5,203.5 425.0,203.3 425.5,203.2 426.0,203.1 426.5,202.8 427.0,202.5 427.5,202.3 428.0,202.2 428.5,202.0 429.0,201.9 429.5,201.7 430.0,201.5 430.5,201.3 431.0,201.1 431.5,200.9 432.0,200.8 432.5,200.6 433.0,200.4 433.5,200.2 434.0,200.1 434.5,199.7 435.0,199.3 435.5,198.9 436.0,198.5 436.5,198.1 437.0,197.7 437.5,197.3 438.0,196.9 438.5,196.4 439.0,195.9 439.5,195.6 440.0,195.2 440.5,194.7 441.0,194.2 441.5,193.8 442.0,193.4 442.5,193.2 443.0,193.0 443.5,192.8 444.0,192.6 444.5,192.4 445.0,192.2 445.5,191.9 446.0,191.7 446.5,191.5 447.0,191.3 447.5,191.0 448.0,190.8 448.5,190.6 449.0,190.4 449.5,190.2 450.0,189.9 450.5,189.7 451.0,189.5 451.5,189.3 452.0,189.0 452.5,188.9 453.0,188.8 453.5,188.6 454.0,188.4 454.5,188.3 455.0,188.1 455.5,187.9 456.0,187.7 456.5,187.5 457.0,187.3 457.5,187.1 458.0,186.9 458.5,186.7 459.0,186.4 459.5,186.1 460.0,185.8 460.5,185.6 461.0,185.4 461.5,185.1 462.0,184.9 462.5,184.6 463.0,184.2 463.5,184.0 464.0,183.7 464.5,183.4 465.0,183.1 465.5,182.9 466.0,182.6 466.5,182.4 467.0,182.1 467.5,181.8 468.0,181.5 468.5,181.2 469.0,180.9 469.5,180.5 470.0,180.2 470.5,179.8 471.0,179.5 471.5,179.1 472.0,178.8 472.5,178.5 473.0,178.1 473.5,177.7 474.0,177.3 474.5,177.0 475.0,176.7 475.5,176.4 476.0,176.2 476.5,175.8 477.0,175.5 477.5,175.3 478.0,175.0 478.5,174.7 479.0,174.4 479.5,174.1 480.0,173.8 480.5,173.4 481.0,173.1 481.5,172.7 482.0,172.4 482.5,171.9 483.0,171.5 483.5,171.2 484.0,170.9 484.5,170.5 485.0,170.2 485.5,169.7 486.0,169.3 486.5,169.0 487.0,168.6 487.5,168.3 488.0,167.9 488.5,167.5 489.0,167.1 489.5,166.7 490.0,166.4 490.5,166.1 491.0,165.8 491.5,165.4 492.0,165.1 492.5,164.6 493.0,164.2 493.5,163.9 494.0,163.5 494.5,163.1 495.0,162.7 495.5,162.3 496.0,161.8 496.5,161.5 497.0,161.1 497.5,160.8 498.0,160.4 498.5,160.0 499.0,159.6 499.5,159.3 500.0,158.9 500.5,158.5 501.0,158.1 501.5,157.7 502.0,157.3 502.5,156.9 503.0,156.4 503.5,155.9 504.0,155.4 504.5,154.9 505.0,154.5 505.5,154.0 506.0,153.6 506.5,153.1 507.0,152.7 507.5,152.2 508.0,151.6" stroke="#2f8fff" stroke-width="4.1" stroke-linejoin="round" transform="translate(0,-0.3)"/>
<polyline points="52.0,128.9 52.5,129.4 53.0,129.8 53.5,130.2 54.0,130.7 54.5,131.1 55.0,131.5 55.5,131.8 56.0,132.2 56.5,132.6 57.0,133.1 57.5,133.4 58.0,133.6 58.5,133.9 59.0,134.1 59.5,134.3 60.0,134.5 60.5,134.8 61.0,135.0 61.5,135.2 62.0,135.4 62.5,135.5 63.0,135.6 63.5,135.7 64.0,135.9 64.5,136.0 65.0,136.1 65.5,136.3 66.0,136.4 66.5,136.5 67.0,136.6 67.5,136.7 68.0,136.8 68.5,136.8 69.0,136.9 69.5,136.9 70.0,136.9 70.5,136.9 71.0,136.9 71.5,136.9 72.0,136.9 72.5,137.1 73.0,137.2 73.5,137.2 74.0,137.2 74.5,137.3 75.0,137.4 75.5,137.5 76.0,137.7 76.5,137.8 77.0,137.9 77.5,137.9 78.0,137.9 78.5,138.0 79.0,138.2 79.5,138.3 80.0,138.4 80.5,138.5 81.0,138.5 81.5,138.6 82.0,138.6 82.5,138.8 83.0,139.0 83.5,139.1 84.0,139.2 84.5,139.4 85.0,139.5 85.5,139.7 86.0,139.9 86.5,140.1 87.0,140.3 87.5,140.4 88.0,140.6 88.5,140.7 89.0,140.9 89.5,141.0 90.0,141.0 90.5,141.2 91.0,141.3 91.5,141.4 92.0,141.6 92.5,141.7 93.0,141.8 93.5,141.9 94.0,142.0 94.5,142.2 95.0,142.4 95.5,142.5 96.0,142.6 96.5,142.7 97.0,142.9 97.5,143.0 98.0,143.2 98.5,143.3 99.0,143.5 99.5,143.6 100.0,143.8 100.5,144.0 101.0,144.3 101.5,144.4 102.0,144.6 102.5,144.8 103.0,144.9 103.5,145.1 104.0,145.2 104.5,145.3 105.0,145.4 105.5,145.5 106.0,145.6 106.5,145.7 107.0,145.8 107.5,146.0 108.0,146.1 108.5,146.3 109.0,146.5 109.5,146.7 110.0,146.9 110.5,147.1 111.0,147.3 111.5,147.3 112.0,147.4 112.5,147.4 113.0,147.4 113.5,147.5 114.0,147.5 114.5,147.8 115.0,148.0 115.5,148.2 116.0,148.5 116.5,148.7 117.0,149.0 117.5,149.2 118.0,149.5 118.5,149.7 119.0,150.0 119.5,150.2 120.0,150.3 120.5,150.5 121.0,150.6 121.5,150.9 122.0,151.1 122.5,151.3 123.0,151.6 123.5,151.8 124.0,152.0 124.5,152.2 125.0,152.5 125.5,152.8 126.0,153.0 126.5,154.0 127.0,155.0 127.5,156.0 128.0,156.9 128.5,157.9 129.0,158.8 129.5,159.7 130.0,160.6 130.5,161.5 131.0,162.5 131.5,163.3 132.0,164.2 132.5,165.1 133.0,165.9 133.5,166.9 134.0,167.8 134.5,167.5 135.0,167.5 135.5,167.5 136.0,167.5 136.5,167.5 137.0,167.5 137.5,167.5 138.0,167.5 138.5,167.5 139.0,167.5 139.5,167.5 140.0,167.5 140.5,167.5 141.0,167.5 141.5,167.5 142.0,167.5 142.5,167.5 143.0,167.5 143.5,167.5 144.0,167.5 144.5,167.5 145.0,167.5 145.5,167.5 146.0,167.5 146.5,167.5 147.0,167.5 147.5,167.5 148.0,167.5 148.5,167.5 149.0,167.5 149.5,167.5 150.0,167.5 150.5,167.5 151.0,167.5 151.5,167.5 152.0,167.5 152.5,167.4 153.0,167.3 153.5,167.2 154.0,167.0 154.5,166.9 155.0,166.8 155.5,166.7 156.0,166.6 156.5,166.5 157.0,166.3 157.5,166.2 158.0,166.1 158.5,166.0 159.0,165.9 159.5,165.8 160.0,165.6 160.5,165.8 161.0,166.0 161.5,166.0 162.0,166.0 162.5,166.1 163.0,166.2 163.5,166.3 164.0,166.4 164.5,166.6 165.0,166.7 165.5,166.9 166.0,167.0 166.5,167.1 167.0,167.2 167.5,167.4 168.0,167.5 168.5,167.7 169.0,167.9 169.5,168.0 170.0,168.1 170.5,168.2 171.0,168.4 171.5,168.5 172.0,168.7 172.5,168.8 173.0,169.0 173.5,169.1 174.0,169.3 174.5,169.5 175.0,169.6 175.5,169.9 176.0,170.1 176.5,170.3 177.0,170.5 177.5,170.7 178.0,170.8 178.5,170.9 179.0,171.1 179.5,171.2 180.0,171.4 180.5,171.5 181.0,171.6 181.5,171.7 182.0,171.8 182.5,172.0 183.0,172.2 183.5,172.3 184.0,172.5 184.5,172.7 185.0,172.9 185.5,173.1 186.0,173.2 186.5,173.4 187.0,173.5 187.5,173.7 188.0,173.9 188.5,174.0 189.0,174.2 189.5,174.2 190.0,174.2 190.5,174.5 191.0,174.7 191.5,174.9 192.0,175.0 192.5,175.2 193.0,175.4 193.5,175.5 194.0,175.6 194.5,175.8 195.0,176.0 195.5,176.1 196.0,176.2 196.5,176.4 197.0,176.6 197.5,176.7 198.0,176.8 198.5,176.9 199.0,177.0 199.5,177.2 200.0,177.4 200.5,177.5 201.0,177.6 201.5,177.6 202.0,177.7 202.5,177.8 203.0,177.9 203.5,178.0 204.0,178.2 204.5,178.2 205.0,178.3 205.5,178.4 206.0,178.6 206.5,178.7 207.0,178.8 207.5,179.0 208.0,179.2 208.5,179.3 209.0,179.5 209.5,179.6 210.0,179.8 210.5,179.9 211.0,180.1 211.5,180.2 212.0,180.4 212.5,180.6 213.0,180.8 213.5,181.0 214.0,181.2 214.5,181.5 215.0,181.7 215.5,181.9 216.0,182.1 216.5,182.3 217.0,182.5 217.5,182.7 218.0,182.9 218.5,183.1 219.0,183.2 219.5,183.4 220.0,183.5 220.5,183.7 221.0,183.9 221.5,184.1 222.0,184.3 222.5,184.5 223.0,184.6 223.5,184.7 224.0,184.8 224.5,185.0 225.0,185.2 225.5,185.2 226.0,185.2 226.5,185.4 227.0,185.5 227.5,185.6 228.0,185.7 228.5,186.0 229.0,186.3 229.5,186.4 230.0,186.6 230.5,187.0 231.0,187.3 231.5,187.4 232.0,187.6 232.5,187.7 233.0,187.9 233.5,188.0 234.0,188.2 234.5,188.3 235.0,188.5 235.5,188.6 236.0,188.6 236.5,188.8 237.0,188.9 237.5,189.0 238.0,189.0 238.5,189.2 239.0,189.3 239.5,189.4 240.0,189.6 240.5,189.7 241.0,189.8 241.5,189.9 242.0,190.1 242.5,190.3 243.0,190.5 243.5,190.5 244.0,190.6 244.5,190.7 245.0,190.8 245.5,190.9 246.0,191.0 246.5,191.1 247.0,191.2 247.5,191.4 248.0,191.5 248.5,191.7 249.0,191.9 249.5,192.1 250.0,192.2 250.5,192.4 251.0,192.6 251.5,192.8 252.0,193.0 252.5,193.2 253.0,193.4 253.5,193.7 254.0,193.9 254.5,194.1 255.0,194.3 255.5,194.5 256.0,194.6 256.5,194.7 257.0,194.9 257.5,195.0 258.0,195.2 258.5,195.3 259.0,195.5 259.5,195.7 260.0,195.9 260.5,196.1 261.0,196.2 261.5,196.4 262.0,196.6 262.5,196.8 263.0,197.0 263.5,197.1 264.0,197.2 264.5,197.3 265.0,197.5 265.5,197.6 266.0,197.8 266.5,198.0 267.0,198.2 267.5,198.3 268.0,198.5 268.5,198.6 269.0,198.8 269.5,198.9 270.0,199.0 270.5,199.2 271.0,199.3 271.5,199.4 272.0,199.5 272.5,199.7 273.0,199.8 273.5,199.9 274.0,200.1 274.5,200.2 275.0,200.4 275.5,200.6 276.0,200.7 276.5,200.9 277.0,201.1 277.5,201.2 278.0,201.2 278.5,201.4 279.0,201.5 279.5,201.6 280.0,201.7 280.5,201.8 281.0,201.9 281.5,201.9 282.0,202.0 282.5,202.1 283.0,202.3 283.5,202.4 284.0,202.5 284.5,202.6 285.0,202.7 285.5,202.7 286.0,202.8 286.5,202.9 287.0,203.0 287.5,203.0 288.0,203.1 288.5,203.1 289.0,203.2 289.5,203.2 290.0,203.2 290.5,203.3 291.0,203.4 291.5,203.4 292.0,203.4 292.5,203.5 293.0,203.6 293.5,203.5 294.0,203.5 294.5,203.5 295.0,203.6 295.5,203.6 296.0,203.5 296.5,203.7 297.0,203.8 297.5,203.8 298.0,203.7 298.5,203.9 299.0,204.2 299.5,204.2 300.0,204.2 300.5,204.3 301.0,204.5 301.5,204.6 302.0,204.6 302.5,204.9 303.0,205.3 303.5,205.5 304.0,205.8 304.5,206.2 305.0,206.6 305.5,206.9 306.0,207.1 306.5,207.3 307.0,207.5 307.5,207.8 308.0,208.2 308.5,208.5 309.0,208.7 309.5,208.9 310.0,209.1 310.5,209.3 311.0,209.6 311.5,210.0 312.0,210.3 312.5,210.5 313.0,210.8 313.5,211.1 314.0,211.4 314.5,211.7 315.0,212.0 315.5,212.2 316.0,212.4 316.5,212.7 317.0,213.0 317.5,213.2 318.0,213.5 318.5,213.7 319.0,213.9 319.5,214.2 320.0,214.4 320.5,214.7 321.0,215.0 321.5,215.3 322.0,215.6 322.5,215.6 323.0,215.7 323.5,215.8 324.0,215.8 324.5,215.9 325.0,216.0 325.5,216.0 326.0,216.0 326.5,216.0 327.0,216.1 327.5,216.2 328.0,216.4 328.5,216.4 329.0,216.5 329.5,216.6 330.0,216.7 330.5,216.8 331.0,216.9 331.5,217.0 332.0,217.1 332.5,217.3 333.0,217.5 333.5,217.8 334.0,218.0 334.5,218.3 335.0,218.6 335.5,218.8 336.0,219.1 336.5,219.4 337.0,219.6 337.5,219.9 338.0,220.1 338.5,220.4 339.0,220.6 339.5,220.8 340.0,221.0 340.5,221.2 341.0,221.4 341.5,221.6 342.0,221.8 342.5,222.1 343.0,222.3 343.5,222.6 344.0,222.9 344.5,223.1 345.0,223.4 345.5,223.6 346.0,223.8 346.5,224.1 347.0,224.3 347.5,224.5 348.0,224.7 348.5,224.9 349.0,225.1 349.5,225.4 350.0,225.6 350.5,225.9 351.0,226.2 351.5,226.5 352.0,226.7 352.5,227.0 353.0,227.2 353.5,227.4 354.0,227.5 354.5,227.3 355.0,227.1 355.5,226.8 356.0,226.6 356.5,226.4 357.0,226.2 357.5,226.0 358.0,225.8 358.5,225.5 359.0,225.3 359.5,225.1 360.0,224.9 360.5,224.7 361.0,224.4 361.5,224.2 362.0,224.0 362.5,223.9 363.0,223.8 363.5,223.6 364.0,223.5 364.5,223.4 365.0,223.2 365.5,223.1 366.0,223.0 366.5,222.9 367.0,222.8 367.5,222.6 368.0,222.5 368.5,222.4 369.0,222.2 369.5,222.1 370.0,222.0 370.5,221.9 371.0,221.8 371.5,221.6 372.0,221.5 372.5,221.4 373.0,221.2 373.5,221.1 374.0,221.0 374.5,220.9 375.0,220.7 375.5,220.6 376.0,220.5 376.5,220.3 377.0,220.2 377.5,220.1 378.0,219.9 378.5,219.8 379.0,219.7 379.5,219.5 380.0,219.4 380.5,219.2 381.0,219.1 381.5,219.0 382.0,218.8 382.5,218.7 383.0,218.6 383.5,218.4 384.0,218.3 384.5,218.2 385.0,218.0 385.5,217.9 386.0,217.8 386.5,217.6 387.0,217.5 387.5,216.6 388.0,215.6 388.5,214.7 389.0,213.8 389.5,212.8 390.0,211.9 390.5,210.9 391.0,210.0 391.5,209.0 392.0,208.0 392.5,207.0 393.0,206.0 393.5,205.0 394.0,204.0 394.5,204.1 395.0,204.2 395.5,204.4 396.0,204.5 396.5,204.6 397.0,204.8 397.5,204.9 398.0,205.0 398.5,204.7 399.0,204.4 399.5,204.1 400.0,203.8 400.5,203.4 401.0,203.1 401.5,202.8 402.0,202.5 402.5,201.9 403.0,201.2 403.5,200.6 404.0,199.9 404.5,199.2 405.0,198.6 405.5,197.9 406.0,197.3 406.5,196.6 407.0,196.0 407.5,195.5 408.0,195.0 408.5,194.5 409.0,194.0 409.5,193.5 410.0,193.0 410.5,192.5 411.0,192.0 411.5,191.5 412.0,191.0 412.5,190.8 413.0,190.5 413.5,190.2 414.0,190.0 414.5,193.2 415.0,196.5 415.5,199.8 416.0,203.0 416.5,202.2 417.0,201.5 417.5,200.8 418.0,200.0 418.5,198.7 419.0,197.3 419.5,196.0 420.0,194.7 420.5,193.3 421.0,192.0 421.5,190.7 422.0,189.3 422.5,188.0 423.0,186.7 423.5,185.3 424.0,184.0 424.5,189.3 425.0,194.7 425.5,200.0 426.0,198.7 426.5,197.3 427.0,196.0 427.5,193.5 428.0,191.0 428.5,188.5 429.0,186.0 429.5,183.5 430.0,181.0 430.5,184.0 431.0,187.0 431.5,190.0 432.0,193.0 432.5,192.2 433.0,191.5 433.5,190.8 434.0,190.0 434.5,189.1 435.0,188.1 435.5,187.2 436.0,186.2 436.5,185.3 437.0,184.4 437.5,183.4 438.0,182.5 438.5,181.8 439.0,181.0 439.5,180.2 440.0,179.5 440.5,178.8 441.0,178.0 441.5,177.2 442.0,176.5 442.5,176.1 443.0,175.6 443.5,175.1 444.0,174.7 444.5,174.2 445.0,173.8 445.5,173.4 446.0,172.9 446.5,172.4 447.0,172.0 447.5,171.6 448.0,171.1 448.5,170.6 449.0,170.2 449.5,169.8 450.0,169.3 450.5,168.9 451.0,168.4 451.5,167.9 452.0,167.5 452.5,167.1 453.0,166.7 453.5,166.3 454.0,165.9 454.5,165.5 455.0,165.1 455.5,164.7 456.0,164.3 456.5,163.9 457.0,163.5 457.5,163.1 458.0,162.7 458.5,162.3 459.0,161.9 459.5,161.5 460.0,161.1 460.5,160.7 461.0,160.3 461.5,159.9 462.0,159.5 462.5,159.0 463.0,158.5 463.5,158.1 464.0,157.6 464.5,157.1 465.0,156.6 465.5,156.1 466.0,155.6 466.5,155.2 467.0,154.7 467.5,154.2 468.0,153.7 468.5,153.2 469.0,152.7 469.5,152.2 470.0,151.8 470.5,151.3 471.0,150.8 471.5,150.3 472.0,149.8 472.5,149.3 473.0,148.9 473.5,148.4 474.0,147.9 474.5,147.4 475.0,146.9 475.5,146.4 476.0,146.0 476.5,145.5 477.0,145.0 477.5,144.5 478.0,143.9 478.5,143.4 479.0,142.8 479.5,142.3 480.0,141.7 480.5,141.2 481.0,140.6 481.5,140.1 482.0,139.5 482.5,139.0 483.0,138.5 483.5,137.9 484.0,137.4 484.5,136.8 485.0,136.3 485.5,135.7 486.0,135.2 486.5,134.6 487.0,134.1 487.5,133.5 488.0,133.0 488.5,132.3 489.0,131.6 489.5,131.0 490.0,130.3 490.5,129.6 491.0,128.9 491.5,128.2 492.0,127.5 492.5,126.9 493.0,126.2 493.5,125.5 494.0,124.8 494.5,124.1 495.0,123.5 495.5,122.8 496.0,122.1 496.5,121.4 497.0,120.7 497.5,120.0 498.0,119.4 498.5,118.7 499.0,118.0 499.5,117.5 500.0,117.0 500.5,116.5 501.0,116.0 501.5,115.5 502.0,115.0 502.5,114.5 503.0,114.0 503.5,113.5 504.0,113.0 504.5,112.5 505.0,112.0 505.5,111.5 506.0,111.0 506.5,110.5 507.0,110.0 507.5,109.5 508.0,109.0" stroke="#eea48a" stroke-width="1.1" stroke-linejoin="round"/>
<polyline points="52.0,125.9 52.5,123.0 53.0,121.8 53.5,125.7 54.0,125.2 54.5,121.1 55.0,125.9 55.5,127.6 56.0,125.3 56.5,124.0 57.0,127.1 57.5,130.1 58.0,129.3 58.5,128.0 59.0,126.9 59.5,128.6 60.0,130.3 60.5,131.8 61.0,132.0 61.5,132.2 62.0,132.4 62.5,132.5 63.0,132.6 63.5,132.7 64.0,132.9 64.5,133.0 65.0,133.1 65.5,133.3 66.0,133.4 66.5,133.5 67.0,133.6 67.5,133.7 68.0,131.9 68.5,130.0 69.0,130.6 69.5,132.5 70.0,133.0 70.5,129.4 71.0,125.9 71.5,128.5 72.0,132.1 72.5,133.5 73.0,132.3 73.5,131.1 74.0,132.2 74.5,133.5 75.0,133.0 75.5,129.4 76.0,129.4 76.5,133.3 77.0,134.2 77.5,133.2 78.0,132.1 78.5,132.6 79.0,133.8 79.5,134.9 80.0,135.4 80.5,135.5 81.0,135.5 81.5,135.6 82.0,135.6 82.5,135.8 83.0,136.0 83.5,136.1 84.0,136.2 84.5,136.4 85.0,136.5 85.5,136.7 86.0,136.9 86.5,137.1 87.0,137.3 87.5,137.4 88.0,137.6 88.5,137.7 89.0,137.9 89.5,138.0 90.0,138.0 90.5,138.2 91.0,138.3 91.5,138.4 92.0,138.6 92.5,138.7 93.0,138.8 93.5,138.9 94.0,139.0 94.5,139.2 95.0,139.4 95.5,139.5 96.0,139.6 96.5,139.7 97.0,139.9 97.5,140.0 98.0,140.2 98.5,140.3 99.0,140.5 99.5,140.6 100.0,140.8 100.5,141.0 101.0,141.3 101.5,141.4 102.0,141.6 102.5,141.8 103.0,141.9 103.5,142.1 104.0,142.2 104.5,142.3 105.0,142.4 105.5,142.5 106.0,142.6 106.5,142.7 107.0,142.8 107.5,143.0 108.0,143.1 108.5,143.3 109.0,143.5 109.5,143.7 110.0,143.9 110.5,144.1 111.0,144.3 111.5,144.3 112.0,144.4 112.5,144.4 113.0,144.4 113.5,144.5 114.0,144.5 114.5,144.8 115.0,145.0 115.5,145.2 116.0,145.5 116.5,145.7 117.0,146.0 117.5,146.2 118.0,146.5 118.5,146.7 119.0,147.0 119.5,147.2 120.0,147.3 120.5,147.5 121.0,147.6 121.5,147.9 122.0,148.1 122.5,148.3 123.0,148.6 123.5,148.8 124.0,149.0 124.5,149.2 125.0,149.5 125.5,149.8 126.0,150.0 126.5,150.5 127.0,150.9 127.5,151.3 128.0,151.7 128.5,152.1 129.0,152.4 129.5,152.8 130.0,153.1 130.5,153.4 131.0,153.8 131.5,154.1 132.0,154.5 132.5,154.8 133.0,155.1 133.5,155.4 134.0,155.8 134.5,156.0 135.0,156.2 135.5,156.2 136.0,156.3 136.5,156.4 137.0,156.6 137.5,156.8 138.0,156.9 138.5,157.1 139.0,157.3 139.5,157.3 140.0,157.4 140.5,157.6 141.0,157.8 141.5,158.0 142.0,158.2 142.5,158.2 143.0,158.3 143.5,158.3 144.0,158.3 144.5,158.5 145.0,158.8 145.5,158.8 146.0,158.9 146.5,159.0 147.0,159.1 147.5,159.3 148.0,159.5 148.5,159.6 149.0,159.8 149.5,159.9 150.0,160.0 150.5,160.2 151.0,160.3 151.5,160.5 152.0,160.6 152.5,160.8 153.0,161.0 153.5,161.2 154.0,161.3 154.5,161.5 155.0,161.6 155.5,161.7 156.0,161.8 156.5,162.0 157.0,162.2 157.5,162.2 158.0,162.3 158.5,162.4 159.0,162.5 159.5,162.6 160.0,162.6 160.5,162.8 161.0,163.0 161.5,163.0 162.0,163.0 162.5,163.1 163.0,163.2 163.5,163.3 164.0,163.4 164.5,163.6 165.0,163.7 165.5,163.9 166.0,164.0 166.5,164.1 167.0,164.2 167.5,164.4 168.0,164.5 168.5,164.7 169.0,164.9 169.5,165.0 170.0,165.1 170.5,165.2 171.0,165.4 171.5,165.5 172.0,165.7 172.5,165.8 173.0,166.0 173.5,166.1 174.0,166.3 174.5,166.5 175.0,166.6 175.5,166.9 176.0,167.1 176.5,167.3 177.0,167.5 177.5,167.7 178.0,167.8 178.5,167.9 179.0,168.1 179.5,168.2 180.0,168.4 180.5,168.5 181.0,168.6 181.5,168.7 182.0,168.8 182.5,169.0 183.0,169.2 183.5,169.3 184.0,169.5 184.5,169.7 185.0,169.9 185.5,170.1 186.0,170.2 186.5,170.4 187.0,170.5 187.5,170.7 188.0,170.9 188.5,171.0 189.0,171.2 189.5,171.2 190.0,171.2 190.5,171.5 191.0,171.7 191.5,171.9 192.0,172.0 192.5,172.2 193.0,172.4 193.5,172.5 194.0,172.6 194.5,172.8 195.0,173.0 195.5,173.1 196.0,173.2 196.5,173.4 197.0,173.6 197.5,173.7 198.0,173.8 198.5,173.9 199.0,174.0 199.5,174.2 200.0,174.4 200.5,172.6 201.0,170.8 201.5,168.9 202.0,168.7 202.5,170.7 203.0,172.6 203.5,174.7 204.0,174.2 204.5,173.1 205.0,171.9 205.5,170.9 206.0,172.0 206.5,173.4 207.0,174.7 207.5,176.0 208.0,174.8 208.5,173.6 209.0,172.4 209.5,171.4 210.0,172.9 210.5,174.5 211.0,176.0 211.5,177.1 212.0,176.7 212.5,176.3 213.0,175.9 213.5,175.6 214.0,176.4 214.5,177.3 215.0,178.2 215.5,178.8 216.0,177.8 216.5,176.8 217.0,175.7 217.5,174.7 218.0,176.1 218.5,177.5 219.0,178.9 219.5,180.2 220.0,179.7 220.5,179.0 221.0,178.3 221.5,178.7 222.0,179.8 222.5,180.9 223.0,180.8 223.5,178.5 224.0,176.3 224.5,175.8 225.0,178.4 225.5,180.7 226.0,181.9 226.5,181.1 227.0,180.3 227.5,179.5 228.0,180.0 228.5,181.2 229.0,182.3 229.5,183.4 230.0,182.6 230.5,181.8 231.0,181.1 231.5,182.0 232.0,183.2 232.5,184.4 233.0,184.0 233.5,182.8 234.0,181.6 234.5,182.5 235.0,184.0 235.5,185.4 236.0,185.6 236.5,185.8 237.0,185.9 237.5,186.0 238.0,186.0 238.5,183.4 239.0,180.8 239.5,178.2 240.0,180.4 240.5,183.2 241.0,186.1 241.5,185.6 242.0,184.0 242.5,182.4 243.0,180.8 243.5,181.0 244.0,182.9 244.5,184.7 245.0,186.6 245.5,187.3 246.0,185.7 246.5,184.2 247.0,182.7 247.5,184.4 248.0,186.2 248.5,188.1 249.0,187.6 249.5,185.6 250.0,183.7 250.5,181.7 251.0,183.1 251.5,185.4 252.0,187.7 252.5,190.0 253.0,188.8 253.5,187.4 254.0,186.0 254.5,184.9 255.0,186.7 255.5,188.6 256.0,190.5 256.5,191.7 257.0,191.9 257.5,192.0 258.0,192.2 258.5,192.3 259.0,192.5 259.5,192.7 260.0,192.9 260.5,191.5 261.0,190.1 261.5,189.0 262.0,190.8 262.5,192.5 263.0,193.8 263.5,192.5 264.0,191.3 264.5,190.1 265.0,189.5 265.5,191.0 266.0,192.4 266.5,194.0 267.0,194.7 267.5,193.0 268.0,191.4 268.5,191.6 269.0,193.6 269.5,195.5 270.0,195.4 270.5,194.8 271.0,194.2 271.5,194.4 272.0,195.3 272.5,196.2 273.0,196.3 273.5,195.3 274.0,194.2 274.5,193.3 275.0,193.0 275.5,194.3 276.0,195.6 276.5,196.9 277.0,198.1 277.5,198.2 278.0,198.2 278.5,198.4 279.0,198.5 279.5,198.6 280.0,198.7 280.5,198.8 281.0,198.9 281.5,198.9 282.0,199.0 282.5,199.1 283.0,199.3 283.5,199.4 284.0,199.5 284.5,198.9 285.0,198.4 285.5,197.8 286.0,197.5 286.5,198.3 287.0,199.0 287.5,199.7 288.0,199.4 288.5,198.0 289.0,196.5 289.5,195.0 290.0,195.0 290.5,196.6 291.0,198.3 291.5,199.8 292.0,199.7 292.5,198.5 293.0,197.4 293.5,196.0 294.0,196.0 294.5,197.3 295.0,198.6 295.5,199.9 296.0,200.5 296.5,200.7 297.0,200.8 297.5,200.8 298.0,200.7 298.5,200.9 299.0,201.2 299.5,201.2 300.0,201.2 300.5,199.7 301.0,198.2 301.5,196.6 302.0,195.3 302.5,197.2 303.0,199.2 303.5,201.1 304.0,202.6 304.5,201.8 305.0,200.9 305.5,199.9 306.0,200.4 306.5,201.9 307.0,203.3 307.5,204.8 308.0,203.5 308.5,202.2 309.0,200.8 309.5,199.8 310.0,201.5 310.5,203.4 311.0,205.4 311.5,206.8 312.0,206.2 312.5,205.5 313.0,204.8 313.5,204.6 314.0,205.8 314.5,207.0 315.0,208.2 315.5,208.9 316.0,208.0 316.5,207.0 317.0,206.1 317.5,205.3 318.0,206.8 318.5,208.2 319.0,209.6 319.5,211.1 320.0,210.8 320.5,210.4 321.0,210.1 321.5,209.7 322.0,210.4 322.5,211.1 323.0,211.8 323.5,212.6 324.0,212.8 324.5,212.9 325.0,213.0 325.5,213.0 326.0,213.0 326.5,213.0 327.0,213.1 327.5,213.2 328.0,213.4 328.5,213.4 329.0,213.5 329.5,213.6 330.0,213.7 330.5,213.8 331.0,213.9 331.5,214.0 332.0,214.1 332.5,214.3 333.0,214.5 333.5,214.8 334.0,215.0 334.5,215.3 335.0,215.6 335.5,215.8 336.0,216.1 336.5,216.4 337.0,216.6 337.5,216.9 338.0,217.1 338.5,217.4 339.0,217.6 339.5,217.8 340.0,218.0 340.5,218.2 341.0,218.4 341.5,218.6 342.0,218.8 342.5,219.0 343.0,219.2 343.5,219.3 344.0,219.5 344.5,219.7 345.0,219.9 345.5,220.0 346.0,220.2 346.5,220.3 347.0,220.5 347.5,220.6 348.0,220.7 348.5,220.8 349.0,221.0 349.5,221.1 350.0,221.3 350.5,221.5 351.0,221.7 351.5,221.9 352.0,222.0 352.5,222.2 353.0,222.4 353.5,222.5 354.0,222.6 354.5,222.6 355.0,222.6 355.5,222.6 356.0,222.5 356.5,222.4 357.0,222.4 357.5,222.4 358.0,222.4 358.5,222.4 359.0,222.4 359.5,222.3 360.0,222.2 360.5,220.2 361.0,218.2 361.5,216.1 362.0,214.1 362.5,215.4 363.0,217.4 363.5,219.4 364.0,221.4 364.5,219.9 365.0,217.0 365.5,213.9 366.0,215.0 366.5,217.8 367.0,220.7 367.5,220.5 368.0,219.1 368.5,217.6 369.0,218.1 369.5,219.5 370.0,220.8 370.5,220.1 371.0,218.7 371.5,217.4 372.0,217.2 372.5,218.5 373.0,219.8 373.5,220.7 374.0,217.9 374.5,215.1 375.0,212.3 375.5,213.4 376.0,216.1 376.5,218.8 377.0,220.0 377.5,217.7 378.0,215.4 378.5,213.3 379.0,213.7 379.5,215.8 380.0,217.9 380.5,220.0 381.0,217.6 381.5,214.9 382.0,212.2 382.5,213.3 383.0,215.9 383.5,218.5 384.0,219.0 384.5,216.9 385.0,214.9 385.5,212.9 386.0,213.3 386.5,215.2 387.0,217.1 387.5,219.1 388.0,218.0 388.5,215.8 389.0,213.6 389.5,211.3 390.0,211.7 390.5,213.8 391.0,215.8 391.5,218.0 392.0,218.5 392.5,216.8 393.0,215.2 393.5,214.2 394.0,214.7 394.5,215.3 395.0,215.9 395.5,212.9 396.0,210.0 396.5,207.0 397.0,205.8 397.5,207.8 398.0,209.8 398.5,210.1 399.0,208.6 399.5,206.3 400.0,207.0 400.5,208.3 401.0,209.5 401.5,208.4 402.0,206.3 402.5,204.6 403.0,202.9 403.5,203.7 404.0,205.2 404.5,206.8 405.0,208.3 405.5,207.0 406.0,205.0 406.5,203.8 407.0,205.5 407.5,207.1 408.0,206.9 408.5,205.7 409.0,204.5 409.5,205.4 410.0,206.3 410.5,206.4 411.0,205.2 411.5,204.0 412.0,202.7 412.5,202.6 413.0,203.6 413.5,204.6 414.0,205.6 414.5,205.2 415.0,203.8 415.5,202.4 416.0,201.0 416.5,202.3 417.0,203.5 417.5,204.7 418.0,205.0 418.5,203.9 419.0,202.8 419.5,202.3 420.0,203.3 420.5,204.1 421.0,204.4 421.5,202.2 422.0,200.1 422.5,197.7 423.0,199.6 423.5,201.4 424.0,203.2 424.5,202.6 425.0,201.5 425.5,200.3 426.0,199.7 426.5,200.4 427.0,201.1 427.5,202.0 428.0,201.3 428.5,199.9 429.0,198.4 429.5,199.3 430.0,200.4 430.5,201.1 431.0,199.7 431.5,198.3 432.0,197.0 432.5,196.6 433.0,197.7 433.5,198.7 434.0,199.7 434.5,198.4 435.0,196.2 435.5,194.1 436.0,192.1 436.5,193.5 437.0,194.9 437.5,196.2 438.0,196.0 438.5,193.5 439.0,190.9 439.5,191.1 440.0,192.8 440.5,194.3 441.0,194.2 441.5,193.8 442.0,193.4 442.5,193.2 443.0,193.0 443.5,192.8 444.0,192.6 444.5,192.4 445.0,192.2 445.5,191.9 446.0,191.7 446.5,191.5 447.0,191.3 447.5,191.0 448.0,190.8 448.5,190.6 449.0,190.4 449.5,190.2 450.0,189.9 450.5,189.7 451.0,189.5 451.5,189.3 452.0,189.0 452.5,188.9 453.0,188.8 453.5,188.6 454.0,188.4 454.5,188.3 455.0,188.1 455.5,187.9 456.0,187.7 456.5,187.5 457.0,187.3 457.5,187.1 458.0,186.9 458.5,186.7 459.0,186.4 459.5,186.1 460.0,185.8 460.5,185.6 461.0,185.4 461.5,185.1 462.0,184.9 462.5,184.6 463.0,184.2 463.5,184.0 464.0,183.7 464.5,183.4 465.0,183.1 465.5,182.9 466.0,182.6 466.5,182.4 467.0,182.1 467.5,181.8 468.0,181.5 468.5,181.2 469.0,180.9 469.5,180.5 470.0,180.2 470.5,179.8 471.0,179.5 471.5,179.1 472.0,178.8 472.5,178.5 473.0,178.1 473.5,177.7 474.0,177.3 474.5,177.0 475.0,176.7 475.5,176.4 476.0,176.2 476.5,175.8 477.0,175.5 477.5,175.3 478.0,175.0 478.5,174.7 479.0,174.4 479.5,174.1 480.0,173.8 480.5,173.4 481.0,173.1 481.5,172.7 482.0,172.4 482.5,171.9 483.0,171.5 483.5,171.2 484.0,170.9 484.5,170.5 485.0,170.2 485.5,169.7 486.0,169.3 486.5,169.0 487.0,168.6 487.5,168.3 488.0,167.9 488.5,167.5 489.0,167.1 489.5,166.7 490.0,166.4 490.5,166.1 491.0,165.8 491.5,165.4 492.0,165.1 492.5,164.6 493.0,164.2 493.5,163.9 494.0,163.5 494.5,163.1 495.0,162.7 495.5,162.3 496.0,161.8 496.5,161.5 497.0,161.1 497.5,160.8 498.0,160.4 498.5,160.0 499.0,159.6 499.5,159.3 500.0,158.9 500.5,158.5 501.0,158.1 501.5,157.7 502.0,157.3 502.5,156.9 503.0,156.4 503.5,155.9 504.0,155.4 504.5,154.9 505.0,154.5 505.5,154.0 506.0,153.6 506.5,153.1 507.0,152.7 507.5,152.2 508.0,151.6" stroke="#ff1a10" stroke-width="3.5" stroke-linejoin="round"/>
<polyline points="52.0,125.9 52.5,123.0 53.0,121.8 53.5,125.7 54.0,125.2 54.5,121.1 55.0,125.9 55.5,127.6 56.0,125.3 56.5,124.0 57.0,127.1 57.5,130.1 58.0,129.3 58.5,128.0 59.0,126.9 59.5,128.6 60.0,130.3 60.5,131.8 61.0,132.0 61.5,132.2 62.0,132.4 62.5,132.5 63.0,132.6 63.5,132.7 64.0,132.9 64.5,133.0 65.0,133.1 65.5,133.3 66.0,133.4 66.5,133.5 67.0,133.6 67.5,133.7 68.0,131.9 68.5,130.0 69.0,130.6 69.5,132.5 70.0,133.0 70.5,129.4 71.0,125.9 71.5,128.5 72.0,132.1 72.5,133.5 73.0,132.3 73.5,131.1 74.0,132.2 74.5,133.5 75.0,133.0 75.5,129.4 76.0,129.4 76.5,133.3 77.0,134.2 77.5,133.2 78.0,132.1 78.5,132.6 79.0,133.8 79.5,134.9 80.0,135.4 80.5,135.5 81.0,135.5 81.5,135.6 82.0,135.6 82.5,135.8 83.0,136.0 83.5,136.1 84.0,136.2 84.5,136.4 85.0,136.5 85.5,136.7 86.0,136.9 86.5,137.1 87.0,137.3 87.5,137.4 88.0,137.6 88.5,137.7 89.0,137.9 89.5,138.0 90.0,138.0 90.5,138.2 91.0,138.3 91.5,138.4 92.0,138.6 92.5,138.7 93.0,138.8 93.5,138.9 94.0,139.0 94.5,139.2 95.0,139.4 95.5,139.5 96.0,139.6 96.5,139.7 97.0,139.9 97.5,140.0 98.0,140.2 98.5,140.3 99.0,140.5 99.5,140.6 100.0,140.8 100.5,141.0 101.0,141.3 101.5,141.4 102.0,141.6 102.5,141.8 103.0,141.9 103.5,142.1 104.0,142.2 104.5,142.3 105.0,142.4 105.5,142.5 106.0,142.6 106.5,142.7 107.0,142.8 107.5,143.0 108.0,143.1 108.5,143.3 109.0,143.5 109.5,143.7 110.0,143.9 110.5,144.1 111.0,144.3 111.5,144.3 112.0,144.4 112.5,144.4 113.0,144.4 113.5,144.5 114.0,144.5 114.5,144.8 115.0,145.0 115.5,145.2 116.0,145.5 116.5,145.7 117.0,146.0 117.5,146.2 118.0,146.5 118.5,146.7 119.0,147.0 119.5,147.2 120.0,147.3 120.5,147.5 121.0,147.6 121.5,147.9 122.0,148.1 122.5,148.3 123.0,148.6 123.5,148.8 124.0,149.0 124.5,149.2 125.0,149.5 125.5,149.8 126.0,150.0 126.5,150.5 127.0,150.9 127.5,151.3 128.0,151.7 128.5,152.1 129.0,152.4 129.5,152.8 130.0,153.1 130.5,153.4 131.0,153.8 131.5,154.1 132.0,154.5 132.5,154.8 133.0,155.1 133.5,155.4 134.0,155.8 134.5,156.0 135.0,156.2 135.5,156.2 136.0,156.3 136.5,156.4 137.0,156.6 137.5,156.8 138.0,156.9 138.5,157.1 139.0,157.3 139.5,157.3 140.0,157.4 140.5,157.6 141.0,157.8 141.5,158.0 142.0,158.2 142.5,158.2 143.0,158.3 143.5,158.3 144.0,158.3 144.5,158.5 145.0,158.8 145.5,158.8 146.0,158.9 146.5,159.0 147.0,159.1 147.5,159.3 148.0,159.5 148.5,159.6 149.0,159.8 149.5,159.9 150.0,160.0 150.5,160.2 151.0,160.3 151.5,160.5 152.0,160.6 152.5,160.8 153.0,161.0 153.5,161.2 154.0,161.3 154.5,161.5 155.0,161.6 155.5,161.7 156.0,161.8 156.5,162.0 157.0,162.2 157.5,162.2 158.0,162.3 158.5,162.4 159.0,162.5 159.5,162.6 160.0,162.6 160.5,162.8 161.0,163.0 161.5,163.0 162.0,163.0 162.5,163.1 163.0,163.2 163.5,163.3 164.0,163.4 164.5,163.6 165.0,163.7 165.5,163.9 166.0,164.0 166.5,164.1 167.0,164.2 167.5,164.4 168.0,164.5 168.5,164.7 169.0,164.9 169.5,165.0 170.0,165.1 170.5,165.2 171.0,165.4 171.5,165.5 172.0,165.7 172.5,165.8 173.0,166.0 173.5,166.1 174.0,166.3 174.5,166.5 175.0,166.6 175.5,166.9 176.0,167.1 176.5,167.3 177.0,167.5 177.5,167.7 178.0,167.8 178.5,167.9 179.0,168.1 179.5,168.2 180.0,168.4 180.5,168.5 181.0,168.6 181.5,168.7 182.0,168.8 182.5,169.0 183.0,169.2 183.5,169.3 184.0,169.5 184.5,169.7 185.0,169.9 185.5,170.1 186.0,170.2 186.5,170.4 187.0,170.5 187.5,170.7 188.0,170.9 188.5,171.0 189.0,171.2 189.5,171.2 190.0,171.2 190.5,171.5 191.0,171.7 191.5,171.9 192.0,172.0 192.5,172.2 193.0,172.4 193.5,172.5 194.0,172.6 194.5,172.8 195.0,173.0 195.5,173.1 196.0,173.2 196.5,173.4 197.0,173.6 197.5,173.7 198.0,173.8 198.5,173.9 199.0,174.0 199.5,174.2 200.0,174.4 200.5,172.6 201.0,170.8 201.5,168.9 202.0,168.7 202.5,170.7 203.0,172.6 203.5,174.7 204.0,174.2 204.5,173.1 205.0,171.9 205.5,170.9 206.0,172.0 206.5,173.4 207.0,174.7 207.5,176.0 208.0,174.8 208.5,173.6 209.0,172.4 209.5,171.4 210.0,172.9 210.5,174.5 211.0,176.0 211.5,177.1 212.0,176.7 212.5,176.3 213.0,175.9 213.5,175.6 214.0,176.4 214.5,177.3 215.0,178.2 215.5,178.8 216.0,177.8 216.5,176.8 217.0,175.7 217.5,174.7 218.0,176.1 218.5,177.5 219.0,178.9 219.5,180.2 220.0,179.7 220.5,179.0 221.0,178.3 221.5,178.7 222.0,179.8 222.5,180.9 223.0,180.8 223.5,178.5 224.0,176.3 224.5,175.8 225.0,178.4 225.5,180.7 226.0,181.9 226.5,181.1 227.0,180.3 227.5,179.5 228.0,180.0 228.5,181.2 229.0,182.3 229.5,183.4 230.0,182.6 230.5,181.8 231.0,181.1 231.5,182.0 232.0,183.2 232.5,184.4 233.0,184.0 233.5,182.8 234.0,181.6 234.5,182.5 235.0,184.0 235.5,185.4 236.0,185.6 236.5,185.8 237.0,185.9 237.5,186.0 238.0,186.0 238.5,183.4 239.0,180.8 239.5,178.2 240.0,180.4 240.5,183.2 241.0,186.1 241.5,185.6 242.0,184.0 242.5,182.4 243.0,180.8 243.5,181.0 244.0,182.9 244.5,184.7 245.0,186.6 245.5,187.3 246.0,185.7 246.5,184.2 247.0,182.7 247.5,184.4 248.0,186.2 248.5,188.1 249.0,187.6 249.5,185.6 250.0,183.7 250.5,181.7 251.0,183.1 251.5,185.4 252.0,187.7 252.5,190.0 253.0,188.8 253.5,187.4 254.0,186.0 254.5,184.9 255.0,186.7 255.5,188.6 256.0,190.5 256.5,191.7 257.0,191.9 257.5,192.0 258.0,192.2 258.5,192.3 259.0,192.5 259.5,192.7 260.0,192.9 260.5,191.5 261.0,190.1 261.5,189.0 262.0,190.8 262.5,192.5 263.0,193.8 263.5,192.5 264.0,191.3 264.5,190.1 265.0,189.5 265.5,191.0 266.0,192.4 266.5,194.0 267.0,194.7 267.5,193.0 268.0,191.4 268.5,191.6 269.0,193.6 269.5,195.5 270.0,195.4 270.5,194.8 271.0,194.2 271.5,194.4 272.0,195.3 272.5,196.2 273.0,196.3 273.5,195.3 274.0,194.2 274.5,193.3 275.0,193.0 275.5,194.3 276.0,195.6 276.5,196.9 277.0,198.1 277.5,198.2 278.0,198.2 278.5,198.4 279.0,198.5 279.5,198.6 280.0,198.7 280.5,198.8 281.0,198.9 281.5,198.9 282.0,199.0 282.5,199.1 283.0,199.3 283.5,199.4 284.0,199.5 284.5,198.9 285.0,198.4 285.5,197.8 286.0,197.5 286.5,198.3 287.0,199.0 287.5,199.7 288.0,199.4 288.5,198.0 289.0,196.5 289.5,195.0 290.0,195.0 290.5,196.6 291.0,198.3 291.5,199.8 292.0,199.7 292.5,198.5 293.0,197.4 293.5,196.0 294.0,196.0 294.5,197.3 295.0,198.6 295.5,199.9 296.0,200.5 296.5,200.7 297.0,200.8 297.5,200.8 298.0,200.7 298.5,200.9 299.0,201.2 299.5,201.2 300.0,201.2 300.5,199.7 301.0,198.2 301.5,196.6 302.0,195.3 302.5,197.2 303.0,199.2 303.5,201.1 304.0,202.6 304.5,201.8 305.0,200.9 305.5,199.9 306.0,200.4 306.5,201.9 307.0,203.3 307.5,204.8 308.0,203.5 308.5,202.2 309.0,200.8 309.5,199.8 310.0,201.5 310.5,203.4 311.0,205.4 311.5,206.8 312.0,206.2 312.5,205.5 313.0,204.8 313.5,204.6 314.0,205.8 314.5,207.0 315.0,208.2 315.5,208.9 316.0,208.0 316.5,207.0 317.0,206.1 317.5,205.3 318.0,206.8 318.5,208.2 319.0,209.6 319.5,211.1 320.0,210.8 320.5,210.4 321.0,210.1 321.5,209.7 322.0,210.4 322.5,211.1 323.0,211.8 323.5,212.6 324.0,212.8 324.5,212.9 325.0,213.0 325.5,213.0 326.0,213.0 326.5,213.0 327.0,213.1 327.5,213.2 328.0,213.4 328.5,213.4 329.0,213.5 329.5,213.6 330.0,213.7 330.5,213.8 331.0,213.9 331.5,214.0 332.0,214.1 332.5,214.3 333.0,214.5 333.5,214.8 334.0,215.0 334.5,215.3 335.0,215.6 335.5,215.8 336.0,216.1 336.5,216.4 337.0,216.6 337.5,216.9 338.0,217.1 338.5,217.4 339.0,217.6 339.5,217.8 340.0,218.0 340.5,218.2 341.0,218.4 341.5,218.6 342.0,218.8 342.5,219.0 343.0,219.2 343.5,219.3 344.0,219.5 344.5,219.7 345.0,219.9 345.5,220.0 346.0,220.2 346.5,220.3 347.0,220.5 347.5,220.6 348.0,220.7 348.5,220.8 349.0,221.0 349.5,221.1 350.0,221.3 350.5,221.5 351.0,221.7 351.5,221.9 352.0,222.0 352.5,222.2 353.0,222.4 353.5,222.5 354.0,222.6 354.5,222.6 355.0,222.6 355.5,222.6 356.0,222.5 356.5,222.4 357.0,222.4 357.5,222.4 358.0,222.4 358.5,222.4 359.0,222.4 359.5,222.3 360.0,222.2 360.5,220.2 361.0,218.2 361.5,216.1 362.0,214.1 362.5,215.4 363.0,217.4 363.5,219.4 364.0,221.4 364.5,219.9 365.0,217.0 365.5,213.9 366.0,215.0 366.5,217.8 367.0,220.7 367.5,220.5 368.0,219.1 368.5,217.6 369.0,218.1 369.5,219.5 370.0,220.8 370.5,220.1 371.0,218.7 371.5,217.4 372.0,217.2 372.5,218.5 373.0,219.8 373.5,220.7 374.0,217.9 374.5,215.1 375.0,212.3 375.5,213.4 376.0,216.1 376.5,218.8 377.0,220.0 377.5,217.7 378.0,215.4 378.5,213.3 379.0,213.7 379.5,215.8 380.0,217.9 380.5,220.0 381.0,217.6 381.5,214.9 382.0,212.2 382.5,213.3 383.0,215.9 383.5,218.5 384.0,219.0 384.5,216.9 385.0,214.9 385.5,212.9 386.0,213.3 386.5,215.2 387.0,217.1 387.5,219.1 388.0,218.0 388.5,215.8 389.0,213.6 389.5,211.3 390.0,211.7 390.5,213.8 391.0,215.8 391.5,218.0 392.0,218.5 392.5,216.8 393.0,215.2 393.5,214.2 394.0,214.7 394.5,215.3 395.0,215.9 395.5,212.9 396.0,210.0 396.5,207.0 397.0,205.8 397.5,207.8 398.0,209.8 398.5,210.1 399.0,208.6 399.5,206.3 400.0,207.0 400.5,208.3 401.0,209.5 401.5,208.4 402.0,206.3 402.5,204.6 403.0,202.9 403.5,203.7 404.0,205.2 404.5,206.8 405.0,208.3 405.5,207.0 406.0,205.0 406.5,203.8 407.0,205.5 407.5,207.1 408.0,206.9 408.5,205.7 409.0,204.5 409.5,205.4 410.0,206.3 410.5,206.4 411.0,205.2 411.5,204.0 412.0,202.7 412.5,202.6 413.0,203.6 413.5,204.6 414.0,205.6 414.5,205.2 415.0,203.8 415.5,202.4 416.0,201.0 416.5,202.3 417.0,203.5 417.5,204.7 418.0,205.0 418.5,203.9 419.0,202.8 419.5,202.3 420.0,203.3 420.5,204.1 421.0,204.4 421.5,202.2 422.0,200.1 422.5,197.7 423.0,199.6 423.5,201.4 424.0,203.2 424.5,202.6 425.0,201.5 425.5,200.3 426.0,199.7 426.5,200.4 427.0,201.1 427.5,202.0 428.0,201.3 428.5,199.9 429.0,198.4 429.5,199.3 430.0,200.4 430.5,201.1 431.0,199.7 431.5,198.3 432.0,197.0 432.5,196.6 433.0,197.7 433.5,198.7 434.0,199.7 434.5,198.4 435.0,196.2 435.5,194.1 436.0,192.1 436.5,193.5 437.0,194.9 437.5,196.2 438.0,196.0 438.5,193.5 439.0,190.9 439.5,191.1 440.0,192.8 440.5,194.3 441.0,194.2 441.5,193.8 442.0,193.4 442.5,193.2 443.0,193.0 443.5,192.8 444.0,192.6 444.5,192.4 445.0,192.2 445.5,191.9 446.0,191.7 446.5,191.5 447.0,191.3 447.5,191.0 448.0,190.8 448.5,190.6 449.0,190.4 449.5,190.2 450.0,189.9 450.5,189.7 451.0,189.5 451.5,189.3 452.0,189.0 452.5,188.9 453.0,188.8 453.5,188.6 454.0,188.4 454.5,188.3 455.0,188.1 455.5,187.9 456.0,187.7 456.5,187.5 457.0,187.3 457.5,187.1 458.0,186.9 458.5,186.7 459.0,186.4 459.5,186.1 460.0,185.8 460.5,185.6 461.0,185.4 461.5,185.1 462.0,184.9 462.5,184.6 463.0,184.2 463.5,184.0 464.0,183.7 464.5,183.4 465.0,183.1 465.5,182.9 466.0,182.6 466.5,182.4 467.0,182.1 467.5,181.8 468.0,181.5 468.5,181.2 469.0,180.9 469.5,180.5 470.0,180.2 470.5,179.8 471.0,179.5 471.5,179.1 472.0,178.8 472.5,178.5 473.0,178.1 473.5,177.7 474.0,177.3 474.5,177.0 475.0,176.7 475.5,176.4 476.0,176.2 476.5,175.8 477.0,175.5 477.5,175.3 478.0,175.0 478.5,174.7 479.0,174.4 479.5,174.1 480.0,173.8 480.5,173.4 481.0,173.1 481.5,172.7 482.0,172.4 482.5,171.9 483.0,171.5 483.5,171.2 484.0,170.9 484.5,170.5 485.0,170.2 485.5,169.7 486.0,169.3 486.5,169.0 487.0,168.6 487.5,168.3 488.0,167.9 488.5,167.5 489.0,167.1 489.5,166.7 490.0,166.4 490.5,166.1 491.0,165.8 491.5,165.4 492.0,165.1 492.5,164.6 493.0,164.2 493.5,163.9 494.0,163.5 494.5,163.1 495.0,162.7 495.5,162.3 496.0,161.8 496.5,161.5 497.0,161.1 497.5,160.8 498.0,160.4 498.5,160.0 499.0,159.6 499.5,159.3 500.0,158.9 500.5,158.5 501.0,158.1 501.5,157.7 502.0,157.3 502.5,156.9 503.0,156.4 503.5,155.9 504.0,155.4 504.5,154.9 505.0,154.5 505.5,154.0 506.0,153.6 506.5,153.1 507.0,152.7 507.5,152.2 508.0,151.6" stroke="#ff3010" stroke-width="2.3" stroke-linejoin="round"/>
<polyline points="123.5,148.8 124.0,149.0 124.5,149.2 125.0,149.5 125.5,149.8 126.0,150.0 126.5,150.5 127.0,150.9 127.5,151.3 128.0,151.7 128.5,152.1 129.0,152.4 129.5,152.8 130.0,153.1 130.5,153.4 131.0,153.8 131.5,154.1 132.0,154.5 132.5,154.8 133.0,155.1 133.5,155.4 134.0,155.8 134.5,156.0" stroke="#3a96f6" stroke-width="4.4"/>
<polyline points="52.0,125.9 52.5,123.0 53.0,121.8 53.5,125.7 54.0,125.2 54.5,121.1 55.0,125.9 55.5,127.6 56.0,125.3 56.5,124.0 57.0,127.1 57.5,130.1 58.0,129.3 58.5,128.0 59.0,126.9 59.5,128.6 60.0,130.3 60.5,131.8 61.0,132.0 61.5,132.2 62.0,132.4 62.5,132.5 63.0,132.6 63.5,132.7 64.0,132.9 64.5,133.0 65.0,133.1 65.5,133.3 66.0,133.4 66.5,133.5 67.0,133.6 67.5,133.7 68.0,131.9 68.5,130.0 69.0,130.6 69.5,132.5 70.0,133.0 70.5,129.4 71.0,125.9 71.5,128.5 72.0,132.1 72.5,133.5 73.0,132.3 73.5,131.1 74.0,132.2 74.5,133.5 75.0,133.0 75.5,129.4 76.0,129.4 76.5,133.3 77.0,134.2 77.5,133.2 78.0,132.1 78.5,132.6 79.0,133.8 79.5,134.9 80.0,135.4 80.5,135.5 81.0,135.5 81.5,135.6 82.0,135.6 82.5,135.8 83.0,136.0 83.5,136.1 84.0,136.2 84.5,136.4 85.0,136.5 85.5,136.7 86.0,136.9 86.5,137.1 87.0,137.3 87.5,137.4 88.0,137.6 88.5,137.7 89.0,137.9 89.5,138.0 90.0,138.0 90.5,138.2 91.0,138.3 91.5,138.4 92.0,138.6 92.5,138.7 93.0,138.8 93.5,138.9 94.0,139.0 94.5,139.2 95.0,139.4 95.5,139.5 96.0,139.6 96.5,139.7 97.0,139.9 97.5,140.0 98.0,140.2 98.5,140.3 99.0,140.5 99.5,140.6 100.0,140.8 100.5,141.0 101.0,141.3 101.5,141.4 102.0,141.6 102.5,141.8 103.0,141.9 103.5,142.1 104.0,142.2 104.5,142.3 105.0,142.4 105.5,142.5 106.0,142.6 106.5,142.7 107.0,142.8 107.5,143.0 108.0,143.1 108.5,143.3 109.0,143.5 109.5,143.7 110.0,143.9 110.5,144.1 111.0,144.3 111.5,144.3 112.0,144.4 112.5,144.4 113.0,144.4 113.5,144.5 114.0,144.5 114.5,144.8 115.0,145.0 115.5,145.2 116.0,145.5 116.5,145.7 117.0,146.0 117.5,146.2 118.0,146.5 118.5,146.7 119.0,147.0 119.5,147.2 120.0,147.3 120.5,147.5 121.0,147.6 121.5,147.9 122.0,148.1 122.5,148.3 123.0,148.6 123.5,148.8 124.0,149.0 124.5,149.2 125.0,149.5 125.5,149.8 126.0,150.0 126.5,150.5 127.0,150.9 127.5,151.3 128.0,151.7 128.5,152.1 129.0,152.4 129.5,152.8 130.0,153.1 130.5,153.4 131.0,153.8 131.5,154.1 132.0,154.5 132.5,154.8 133.0,155.1 133.5,155.4 134.0,155.8 134.5,156.0 135.0,156.2 135.5,156.2 136.0,156.3 136.5,156.4 137.0,156.6 137.5,156.8 138.0,156.9 138.5,157.1 139.0,157.3 139.5,157.3 140.0,157.4 140.5,157.6 141.0,157.8 141.5,158.0 142.0,158.2 142.5,158.2 143.0,158.3 143.5,158.3 144.0,158.3 144.5,158.5 145.0,158.8 145.5,158.8 146.0,158.9 146.5,159.0 147.0,159.1 147.5,159.3 148.0,159.5 148.5,159.6 149.0,159.8 149.5,159.9 150.0,160.0 150.5,160.2 151.0,160.3 151.5,160.5 152.0,160.6 152.5,160.8 153.0,161.0 153.5,161.2 154.0,161.3 154.5,161.5 155.0,161.6 155.5,161.7 156.0,161.8 156.5,162.0 157.0,162.2 157.5,162.2 158.0,162.3 158.5,162.4 159.0,162.5 159.5,162.6 160.0,162.6 160.5,162.8 161.0,163.0 161.5,163.0 162.0,163.0 162.5,163.1 163.0,163.2 163.5,163.3 164.0,163.4 164.5,163.6 165.0,163.7 165.5,163.9 166.0,164.0 166.5,164.1 167.0,164.2 167.5,164.4 168.0,164.5 168.5,164.7 169.0,164.9 169.5,165.0 170.0,165.1 170.5,165.2 171.0,165.4 171.5,165.5 172.0,165.7 172.5,165.8 173.0,166.0 173.5,166.1 174.0,166.3 174.5,166.5 175.0,166.6 175.5,166.9 176.0,167.1 176.5,167.3 177.0,167.5 177.5,167.7 178.0,167.8 178.5,167.9 179.0,168.1 179.5,168.2 180.0,168.4 180.5,168.5 181.0,168.6 181.5,168.7 182.0,168.8 182.5,169.0 183.0,169.2 183.5,169.3 184.0,169.5 184.5,169.7 185.0,169.9 185.5,170.1 186.0,170.2 186.5,170.4 187.0,170.5 187.5,170.7 188.0,170.9 188.5,171.0 189.0,171.2 189.5,171.2 190.0,171.2 190.5,171.5 191.0,171.7 191.5,171.9 192.0,172.0 192.5,172.2 193.0,172.4 193.5,172.5 194.0,172.6 194.5,172.8 195.0,173.0 195.5,173.1 196.0,173.2 196.5,173.4 197.0,173.6 197.5,173.7 198.0,173.8 198.5,173.9 199.0,174.0 199.5,174.2 200.0,174.4 200.5,172.6 201.0,170.8 201.5,168.9 202.0,168.7 202.5,170.7 203.0,172.6 203.5,174.7 204.0,174.2 204.5,173.1 205.0,171.9 205.5,170.9 206.0,172.0 206.5,173.4 207.0,174.7 207.5,176.0 208.0,174.8 208.5,173.6 209.0,172.4 209.5,171.4 210.0,172.9 210.5,174.5 211.0,176.0 211.5,177.1 212.0,176.7 212.5,176.3 213.0,175.9 213.5,175.6 214.0,176.4 214.5,177.3 215.0,178.2 215.5,178.8 216.0,177.8 216.5,176.8 217.0,175.7 217.5,174.7 218.0,176.1 218.5,177.5 219.0,178.9 219.5,180.2 220.0,179.7 220.5,179.0 221.0,178.3 221.5,178.7 222.0,179.8 222.5,180.9 223.0,180.8 223.5,178.5 224.0,176.3 224.5,175.8 225.0,178.4 225.5,180.7 226.0,181.9 226.5,181.1 227.0,180.3 227.5,179.5 228.0,180.0 228.5,181.2 229.0,182.3 229.5,183.4 230.0,182.6 230.5,181.8 231.0,181.1 231.5,182.0 232.0,183.2 232.5,184.4 233.0,184.0 233.5,182.8 234.0,181.6 234.5,182.5 235.0,184.0 235.5,185.4 236.0,185.6 236.5,185.8 237.0,185.9 237.5,186.0 238.0,186.0 238.5,183.4 239.0,180.8 239.5,178.2 240.0,180.4 240.5,183.2 241.0,186.1 241.5,185.6 242.0,184.0 242.5,182.4 243.0,180.8 243.5,181.0 244.0,182.9 244.5,184.7 245.0,186.6 245.5,187.3 246.0,185.7 246.5,184.2 247.0,182.7 247.5,184.4 248.0,186.2 248.5,188.1 249.0,187.6 249.5,185.6 250.0,183.7 250.5,181.7 251.0,183.1 251.5,185.4 252.0,187.7 252.5,190.0 253.0,188.8 253.5,187.4 254.0,186.0 254.5,184.9 255.0,186.7 255.5,188.6 256.0,190.5 256.5,191.7 257.0,191.9 257.5,192.0 258.0,192.2 258.5,192.3 259.0,192.5 259.5,192.7 260.0,192.9 260.5,191.5 261.0,190.1 261.5,189.0 262.0,190.8 262.5,192.5 263.0,193.8 263.5,192.5 264.0,191.3 264.5,190.1 265.0,189.5 265.5,191.0 266.0,192.4 266.5,194.0 267.0,194.7 267.5,193.0 268.0,191.4 268.5,191.6 269.0,193.6 269.5,195.5 270.0,195.4 270.5,194.8 271.0,194.2 271.5,194.4 272.0,195.3 272.5,196.2 273.0,196.3 273.5,195.3 274.0,194.2 274.5,193.3 275.0,193.0 275.5,194.3 276.0,195.6 276.5,196.9 277.0,198.1 277.5,198.2 278.0,198.2 278.5,198.4 279.0,198.5 279.5,198.6 280.0,198.7 280.5,198.8 281.0,198.9 281.5,198.9 282.0,199.0 282.5,199.1 283.0,199.3 283.5,199.4 284.0,199.5 284.5,198.9 285.0,198.4 285.5,197.8 286.0,197.5 286.5,198.3 287.0,199.0 287.5,199.7 288.0,199.4 288.5,198.0 289.0,196.5 289.5,195.0 290.0,195.0 290.5,196.6 291.0,198.3 291.5,199.8 292.0,199.7 292.5,198.5 293.0,197.4 293.5,196.0 294.0,196.0 294.5,197.3 295.0,198.6 295.5,199.9 296.0,200.5 296.5,200.7 297.0,200.8 297.5,200.8 298.0,200.7 298.5,200.9 299.0,201.2 299.5,201.2 300.0,201.2 300.5,199.7 301.0,198.2 301.5,196.6 302.0,195.3 302.5,197.2 303.0,199.2 303.5,201.1 304.0,202.6 304.5,201.8 305.0,200.9 305.5,199.9 306.0,200.4 306.5,201.9 307.0,203.3 307.5,204.8 308.0,203.5 308.5,202.2 309.0,200.8 309.5,199.8 310.0,201.5 310.5,203.4 311.0,205.4 311.5,206.8 312.0,206.2 312.5,205.5 313.0,204.8 313.5,204.6 314.0,205.8 314.5,207.0 315.0,208.2 315.5,208.9 316.0,208.0 316.5,207.0 317.0,206.1 317.5,205.3 318.0,206.8 318.5,208.2 319.0,209.6 319.5,211.1 320.0,210.8 320.5,210.4 321.0,210.1 321.5,209.7 322.0,210.4 322.5,211.1 323.0,211.8 323.5,212.6 324.0,212.8 324.5,212.9 325.0,213.0 325.5,213.0 326.0,213.0 326.5,213.0 327.0,213.1 327.5,213.2 328.0,213.4 328.5,213.4 329.0,213.5 329.5,213.6 330.0,213.7 330.5,213.8 331.0,213.9 331.5,214.0 332.0,214.1 332.5,214.3 333.0,214.5 333.5,214.8 334.0,215.0 334.5,215.3 335.0,215.6 335.5,215.8 336.0,216.1 336.5,216.4 337.0,216.6 337.5,216.9 338.0,217.1 338.5,217.4 339.0,217.6 339.5,217.8 340.0,218.0 340.5,218.2 341.0,218.4 341.5,218.6 342.0,218.8 342.5,219.0 343.0,219.2 343.5,219.3 344.0,219.5 344.5,219.7 345.0,219.9 345.5,220.0 346.0,220.2 346.5,220.3 347.0,220.5 347.5,220.6 348.0,220.7 348.5,220.8 349.0,221.0 349.5,221.1 350.0,221.3 350.5,221.5 351.0,221.7 351.5,221.9 352.0,222.0 352.5,222.2 353.0,222.4 353.5,222.5 354.0,222.6 354.5,222.6 355.0,222.6 355.5,222.6 356.0,222.5 356.5,222.4 357.0,222.4 357.5,222.4 358.0,222.4 358.5,222.4 359.0,222.4 359.5,222.3 360.0,222.2 360.5,220.2 361.0,218.2 361.5,216.1 362.0,214.1 362.5,215.4 363.0,217.4 363.5,219.4 364.0,221.4 364.5,219.9 365.0,217.0 365.5,213.9 366.0,215.0 366.5,217.8 367.0,220.7 367.5,220.5 368.0,219.1 368.5,217.6 369.0,218.1 369.5,219.5 370.0,220.8 370.5,220.1 371.0,218.7 371.5,217.4 372.0,217.2 372.5,218.5 373.0,219.8 373.5,220.7 374.0,217.9 374.5,215.1 375.0,212.3 375.5,213.4 376.0,216.1 376.5,218.8 377.0,220.0 377.5,217.7 378.0,215.4 378.5,213.3 379.0,213.7 379.5,215.8 380.0,217.9 380.5,220.0 381.0,217.6 381.5,214.9 382.0,212.2 382.5,213.3 383.0,215.9 383.5,218.5 384.0,219.0 384.5,216.9 385.0,214.9 385.5,212.9 386.0,213.3 386.5,215.2 387.0,217.1 387.5,219.1 388.0,218.0 388.5,215.8 389.0,213.6 389.5,211.3 390.0,211.7 390.5,213.8 391.0,215.8 391.5,218.0 392.0,218.5 392.5,216.8 393.0,215.2 393.5,214.2 394.0,214.7 394.5,215.3 395.0,215.9 395.5,212.9 396.0,210.0 396.5,207.0 397.0,205.8 397.5,207.8 398.0,209.8 398.5,210.1 399.0,208.6 399.5,206.3 400.0,207.0 400.5,208.3 401.0,209.5 401.5,208.4 402.0,206.3 402.5,204.6 403.0,202.9 403.5,203.7 404.0,205.2 404.5,206.8 405.0,208.3 405.5,207.0 406.0,205.0 406.5,203.8 407.0,205.5 407.5,207.1 408.0,206.9 408.5,205.7 409.0,204.5 409.5,205.4 410.0,206.3 410.5,206.4 411.0,205.2 411.5,204.0 412.0,202.7 412.5,202.6 413.0,203.6 413.5,204.6 414.0,205.6 414.5,205.2 415.0,203.8 415.5,202.4 416.0,201.0 416.5,202.3 417.0,203.5 417.5,204.7 418.0,205.0 418.5,203.9 419.0,202.8 419.5,202.3 420.0,203.3 420.5,204.1 421.0,204.4 421.5,202.2 422.0,200.1 422.5,197.7 423.0,199.6 423.5,201.4 424.0,203.2 424.5,202.6 425.0,201.5 425.5,200.3 426.0,199.7 426.5,200.4 427.0,201.1 427.5,202.0 428.0,201.3 428.5,199.9 429.0,198.4 429.5,199.3 430.0,200.4 430.5,201.1 431.0,199.7 431.5,198.3 432.0,197.0 432.5,196.6 433.0,197.7 433.5,198.7 434.0,199.7 434.5,198.4 435.0,196.2 435.5,194.1 436.0,192.1 436.5,193.5 437.0,194.9 437.5,196.2 438.0,196.0 438.5,193.5 439.0,190.9 439.5,191.1 440.0,192.8 440.5,194.3 441.0,194.2 441.5,193.8 442.0,193.4 442.5,193.2 443.0,193.0 443.5,192.8 444.0,192.6 444.5,192.4 445.0,192.2 445.5,191.9 446.0,191.7 446.5,191.5 447.0,191.3 447.5,191.0 448.0,190.8 448.5,190.6 449.0,190.4 449.5,190.2 450.0,189.9 450.5,189.7 451.0,189.5 451.5,189.3 452.0,189.0 452.5,188.9 453.0,188.8 453.5,188.6 454.0,188.4 454.5,188.3 455.0,188.1 455.5,187.9 456.0,187.7 456.5,187.5 457.0,187.3 457.5,187.1 458.0,186.9 458.5,186.7 459.0,186.4 459.5,186.1 460.0,185.8 460.5,185.6 461.0,185.4 461.5,185.1 462.0,184.9 462.5,184.6 463.0,184.2 463.5,184.0 464.0,183.7 464.5,183.4 465.0,183.1 465.5,182.9 466.0,182.6 466.5,182.4 467.0,182.1 467.5,181.8 468.0,181.5 468.5,181.2 469.0,180.9 469.5,180.5 470.0,180.2 470.5,179.8 471.0,179.5 471.5,179.1 472.0,178.8 472.5,178.5 473.0,178.1 473.5,177.7 474.0,177.3 474.5,177.0 475.0,176.7 475.5,176.4 476.0,176.2 476.5,175.8 477.0,175.5 477.5,175.3 478.0,175.0 478.5,174.7 479.0,174.4 479.5,174.1 480.0,173.8 480.5,173.4 481.0,173.1 481.5,172.7 482.0,172.4 482.5,171.9 483.0,171.5 483.5,171.2 484.0,170.9 484.5,170.5 485.0,170.2 485.5,169.7 486.0,169.3 486.5,169.0 487.0,168.6 487.5,168.3 488.0,167.9 488.5,167.5 489.0,167.1 489.5,166.7 490.0,166.4 490.5,166.1 491.0,165.8 491.5,165.4 492.0,165.1 492.5,164.6 493.0,164.2 493.5,163.9 494.0,163.5 494.5,163.1 495.0,162.7 495.5,162.3 496.0,161.8 496.5,161.5 497.0,161.1 497.5,160.8 498.0,160.4 498.5,160.0 499.0,159.6 499.5,159.3 500.0,158.9 500.5,158.5 501.0,158.1 501.5,157.7 502.0,157.3 502.5,156.9 503.0,156.4 503.5,155.9 504.0,155.4 504.5,154.9 505.0,154.5 505.5,154.0 506.0,153.6 506.5,153.1 507.0,152.7 507.5,152.2 508.0,151.6" stroke="#ffe040" stroke-width="1.15" stroke-linejoin="round"/>
<path d="M52.0 84.7V95.2M53.0 84.6V94.8M54.0 84.8V95.9M55.0 87.2V99.1M56.0 85.5V98.8M57.0 89.3V98.5M58.0 89.6V99.2M59.0 89.5V100.2M60.0 91.4V101.1M61.0 91.8V101.5M62.0 92.0V101.3M63.0 92.2V102.7M64.0 91.2V102.2M65.0 91.0V102.5M66.0 92.6V103.1M67.0 90.1V102.3M68.0 90.4V101.8M69.0 92.1V104.0M70.0 91.6V104.0M71.0 91.0V102.7M72.0 92.8V104.4M73.0 92.9V104.0M74.0 93.0V103.8M75.0 90.7V101.7M76.0 89.0V99.9M77.0 89.4V102.8M78.0 90.8V101.1M79.0 92.6V102.5M80.0 94.6V105.2M81.0 94.7V107.1M82.0 97.4V108.6M83.0 99.9V109.6M84.0 101.0V111.8M85.0 100.2V110.3M86.0 102.7V112.3M87.0 103.1V113.6M88.0 105.1V116.0M89.0 104.1V116.8M90.0 105.0V115.2M91.0 106.4V115.8M92.0 104.5V115.3M93.0 103.8V116.7M94.0 104.8V114.6M95.0 105.1V117.2M96.0 105.9V117.0M97.0 107.3V118.7M98.0 108.5V119.8M99.0 109.3V120.4M100.0 107.8V118.3M101.0 109.4V119.9M102.0 110.0V119.1M103.0 108.5V119.7M104.0 108.7V119.4M105.0 108.0V118.9M106.0 109.4V118.5M107.0 107.3V118.2M108.0 109.5V120.8M109.0 110.0V119.6M110.0 108.5V119.7M111.0 108.9V119.4M112.0 107.9V120.4M113.0 110.3V121.0M114.0 112.5V121.0M115.0 110.8V121.4M116.0 110.4V121.1M117.0 110.7V121.6M118.0 112.9V124.4M119.0 114.2V124.9M120.0 115.5V125.7M121.0 115.8V126.8M122.0 117.2V128.7M123.0 118.6V128.6M124.0 118.7V129.9M125.0 119.9V131.8M126.0 119.9V130.3M127.0 119.9V129.6M128.0 120.1V130.5M129.0 118.6V130.4M130.0 120.2V130.3M131.0 119.3V131.3M132.0 120.0V131.8M133.0 120.9V131.7M134.0 121.7V132.9M135.0 122.8V131.4M136.0 123.8V134.0M137.0 123.8V135.7M138.0 125.6V136.1M139.0 124.8V135.0M140.0 125.5V136.7M141.0 125.5V135.8M142.0 124.1V134.6M143.0 125.9V135.5M144.0 125.3V135.9M145.0 126.4V136.2M146.0 126.8V137.9M147.0 126.7V137.7M148.0 128.1V136.5M149.0 125.7V136.2M150.0 124.9V137.0M151.0 126.5V138.6M152.0 126.3V136.1M153.0 126.3V136.8M154.0 125.0V138.1M155.0 127.3V138.9M156.0 128.7V138.6M157.0 126.6V139.7M158.0 127.7V137.8M159.0 127.8V138.3M160.0 127.9V137.1M161.0 127.8V137.8M162.0 127.6V138.5M163.0 127.4V139.2M164.0 129.4V139.3M165.0 128.0V138.2M166.0 126.9V138.3M167.0 129.3V139.4M168.0 129.1V139.3M169.0 130.1V141.7M170.0 129.7V142.1M171.0 131.2V142.8M172.0 131.5V142.2M173.0 129.9V141.9M174.0 132.3V143.6M175.0 131.5V144.4M176.0 133.1V144.3M177.0 133.8V144.2M178.0 133.6V146.0M179.0 133.0V144.0M180.0 132.5V144.8M181.0 134.8V143.8M182.0 134.5V144.1M183.0 133.4V146.5M184.0 134.7V144.4M185.0 134.4V146.1M186.0 133.6V146.8M187.0 135.6V146.6M188.0 134.8V145.4M189.0 134.6V145.6M190.0 135.2V147.8M191.0 137.0V148.0M192.0 135.0V147.6M193.0 133.8V145.9M194.0 133.4V146.8M195.0 134.3V145.1M196.0 134.3V145.2M197.0 135.6V147.5M198.0 136.1V147.1M199.0 134.9V147.1M200.0 135.5V146.3M201.0 134.2V146.4M202.0 134.8V145.3M203.0 137.2V147.9M204.0 137.2V148.7M205.0 136.9V148.0M206.0 135.4V148.4M207.0 137.1V146.6M208.0 136.3V146.6M209.0 135.5V148.1M210.0 136.9V148.0M211.0 135.3V148.5M212.0 136.1V146.0M213.0 134.5V146.9M214.0 134.8V146.0M215.0 134.4V144.8M216.0 135.6V148.3M217.0 136.4V147.7M218.0 135.7V146.3M219.0 136.5V146.9M220.0 136.2V146.8M221.0 137.2V149.3M222.0 137.7V148.2M223.0 137.7V150.2M224.0 139.2V151.3M225.0 141.2V150.0M226.0 140.0V149.8M227.0 140.6V152.2M228.0 141.9V152.9M229.0 140.8V151.4M230.0 142.1V150.7M231.0 140.9V153.3M232.0 142.3V153.8M233.0 142.6V152.4M234.0 142.6V152.7M235.0 140.9V151.0M236.0 139.7V152.6M237.0 140.4V153.0M238.0 142.5V153.8M239.0 143.8V154.7M240.0 140.7V152.5M241.0 141.7V154.3M242.0 140.7V151.9M243.0 139.6V152.8M244.0 140.6V152.8M245.0 140.6V151.7M246.0 141.4V151.7M247.0 143.2V153.6M248.0 141.8V155.0M249.0 144.3V155.5M250.0 145.3V155.8M251.0 145.3V154.5M252.0 144.3V156.4M253.0 146.4V156.5M254.0 147.6V159.3M255.0 149.2V159.9M256.0 151.7V162.1M257.0 151.0V161.5M258.0 152.9V161.7M259.0 151.7V163.2M260.0 149.8V163.2M261.0 152.4V162.6M262.0 151.1V161.6M263.0 153.7V164.3M264.0 153.7V163.9M265.0 151.8V164.7M266.0 154.2V164.6M267.0 152.2V165.0M268.0 154.9V164.5M269.0 153.9V165.7M270.0 153.8V167.1M271.0 154.8V165.2M272.0 155.5V166.6M273.0 156.1V168.4M274.0 158.9V170.0M275.0 161.0V171.9M276.0 161.1V171.6M277.0 163.8V173.7M278.0 165.9V176.7M279.0 165.5V174.9M280.0 164.1V176.1M281.0 163.0V176.1M282.0 164.5V172.8M283.0 161.7V173.6M284.0 161.9V172.8M285.0 161.0V173.9M286.0 161.0V172.2M287.0 159.2V170.8M288.0 159.4V171.8M289.0 159.9V170.9M290.0 157.6V170.6M291.0 160.1V170.5M292.0 158.5V169.3M293.0 158.6V169.6M294.0 158.9V170.4M295.0 158.7V172.1M296.0 160.4V171.3M297.0 158.2V169.4M298.0 160.0V170.7M299.0 157.6V169.9M300.0 158.5V169.9M301.0 159.8V170.5M302.0 159.8V170.3M303.0 161.0V171.8M304.0 161.2V172.7M305.0 161.0V173.3M306.0 163.3V171.7M307.0 163.9V173.7M308.0 163.8V174.2M309.0 164.3V176.8M310.0 166.6V175.8M311.0 165.6V175.5M312.0 166.0V176.8M313.0 167.3V177.4M314.0 168.3V179.4M315.0 168.0V181.1M316.0 170.4V180.4M317.0 169.1V181.5M318.0 169.6V180.1M319.0 171.4V182.2M320.0 173.8V184.6M321.0 174.6V183.8M322.0 175.2V185.4M323.0 175.0V184.8M324.0 173.2V186.2M325.0 174.9V185.6M326.0 174.0V185.6M327.0 172.1V183.1M328.0 171.8V183.8M329.0 171.5V184.8M330.0 173.2V182.9M331.0 172.9V182.2M332.0 171.6V184.5M333.0 171.9V184.8M334.0 174.2V185.5M335.0 175.8V187.2M336.0 175.9V187.2M337.0 176.4V187.7M338.0 177.2V188.7M339.0 177.6V187.2M340.0 178.7V189.8M341.0 180.3V191.4M342.0 179.0V191.3M343.0 178.5V191.6M344.0 181.4V192.3M345.0 180.9V191.6M346.0 180.6V193.0M347.0 183.2V195.2M348.0 182.9V194.9M349.0 181.3V193.8M350.0 183.2V192.6M351.0 180.6V191.3M352.0 181.5V192.1M353.0 183.6V192.8M354.0 184.5V193.6M355.0 183.9V195.3M356.0 182.5V195.5M357.0 182.3V192.9M358.0 180.7V192.5M359.0 181.2V192.7M360.0 180.3V190.5M361.0 180.9V191.5M362.0 180.9V190.5M363.0 180.1V189.7M364.0 179.3V191.0M365.0 180.4V191.6M366.0 179.9V190.6M367.0 179.8V189.2M368.0 179.8V190.2M369.0 179.1V189.1M370.0 177.7V189.7M371.0 178.2V189.5M372.0 177.2V188.8M373.0 178.9V188.1M374.0 176.3V188.5M375.0 178.2V188.9M376.0 177.4V189.9M377.0 176.9V187.3M378.0 177.6V189.5M379.0 176.7V189.2M380.0 176.7V188.6M381.0 176.4V187.6M382.0 175.4V185.9M383.0 177.4V188.3M384.0 175.9V187.9M385.0 177.1V187.4M386.0 174.6V186.2M387.0 174.5V185.7M388.0 174.6V185.2M389.0 176.6V187.6M390.0 176.2V186.6M391.0 174.1V185.5M392.0 173.6V183.5M393.0 170.8V182.2M394.0 171.0V183.6M395.0 172.2V181.9M396.0 171.4V184.2M397.0 173.5V182.2M398.0 170.5V183.7M399.0 172.6V182.7M400.0 171.8V182.9M401.0 170.8V183.2M402.0 171.7V183.0M403.0 169.6V181.4M404.0 169.8V180.9M405.0 167.8V179.9M406.0 168.2V178.7M407.0 168.2V179.4M408.0 168.9V178.3M409.0 167.6V180.9M410.0 169.1V180.1M411.0 167.6V179.0M412.0 168.1V178.6M413.0 168.8V178.1M414.0 167.3V178.3M415.0 166.3V178.6M416.0 167.9V177.2M417.0 166.7V178.9M418.0 166.9V176.7M419.0 167.4V177.9M420.0 163.7V176.0M421.0 165.4V175.6M422.0 166.4V176.0M423.0 167.1V177.2M424.0 164.5V177.2M425.0 166.1V176.2M426.0 165.7V174.8M427.0 165.4V175.2M428.0 163.6V174.5M429.0 164.7V175.6M430.0 164.9V175.8M431.0 164.1V175.3M432.0 162.6V173.6M433.0 158.6V170.6M434.0 157.6V168.1M435.0 155.0V165.8M436.0 154.4V166.2M437.0 154.7V164.1M438.0 153.0V164.7M439.0 151.6V162.6M440.0 150.6V159.3M441.0 147.2V158.0M442.0 147.6V158.8M443.0 145.8V157.5M444.0 145.5V156.3M445.0 145.9V156.1M446.0 146.4V156.0M447.0 148.2V159.6M448.0 145.8V156.9M449.0 147.8V158.1M450.0 147.5V157.6M451.0 146.9V157.1M452.0 144.9V156.4M453.0 145.1V156.0M454.0 144.1V155.9M455.0 145.7V155.8M456.0 144.9V156.3M457.0 143.9V154.9M458.0 144.3V154.6M459.0 144.3V153.9M460.0 144.9V155.2M461.0 143.1V153.3M462.0 142.4V153.0M463.0 140.3V151.3M464.0 141.2V152.7M465.0 140.2V152.3M466.0 141.9V152.0M467.0 139.4V152.7M468.0 138.7V148.6M469.0 136.9V149.5M470.0 137.5V147.2M471.0 135.9V145.5M472.0 136.1V145.5M473.0 133.6V145.4M474.0 133.5V143.6M475.0 131.5V142.4M476.0 131.2V141.7M477.0 130.0V141.8M478.0 130.5V140.5M479.0 129.1V139.3M480.0 127.7V140.5M481.0 126.7V139.6M482.0 126.1V138.6M483.0 125.6V136.9M484.0 123.9V135.9M485.0 123.6V134.0M486.0 123.0V132.8M487.0 122.3V133.3M488.0 120.8V130.9M489.0 117.8V130.5M490.0 118.4V128.9M491.0 115.8V127.1M492.0 115.4V125.2M493.0 113.3V124.8M494.0 112.9V122.6M495.0 108.9V120.5M496.0 110.0V119.1M497.0 109.0V118.5M498.0 106.9V117.2M499.0 103.6V113.5M500.0 103.3V112.0M501.0 101.3V110.8M502.0 100.3V110.5M503.0 98.2V109.5M504.0 97.9V108.9M505.0 97.9V108.8M506.0 95.9V108.3M507.0 95.7V106.3M508.0 93.7V104.3" stroke="#ff2014" stroke-width="1.3"/>
<path d="M52.0 86.3V94.6M53.0 85.9V94.4M54.0 89.1V96.7M55.0 87.9V96.8M56.0 90.0V96.3M57.0 89.4V98.7M58.0 89.6V99.1M59.0 90.7V95.4M60.0 91.8V101.0M61.0 92.8V100.6M62.0 92.2V100.6M63.0 93.0V101.3M64.0 91.8V101.6M65.0 91.2V101.5M66.0 91.8V101.1M67.0 96.0V100.9M68.0 95.3V102.2M69.0 93.3V99.7M70.0 93.6V99.2M71.0 95.7V101.5M72.0 94.8V103.6M73.0 92.7V103.3M74.0 96.4V101.9M75.0 92.4V101.5M76.0 90.6V99.7M77.0 91.8V97.6M78.0 92.6V102.1M79.0 92.9V98.1M80.0 100.6V105.7M81.0 97.7V106.7M82.0 98.4V108.6M83.0 99.5V109.7M84.0 101.4V107.1M85.0 100.7V106.4M86.0 103.0V112.3M87.0 103.9V109.4M88.0 104.9V114.4M89.0 106.9V115.9M90.0 106.5V114.9M91.0 105.8V115.9M92.0 105.7V116.1M93.0 106.5V115.2M94.0 104.8V115.5M95.0 105.8V115.7M96.0 107.3V116.4M97.0 108.2V118.7M98.0 110.1V118.6M99.0 110.3V118.7M100.0 110.0V118.2M101.0 109.3V118.9M102.0 110.2V114.7M103.0 109.8V119.2M104.0 109.3V118.8M105.0 109.5V118.3M106.0 109.1V119.0M107.0 109.1V116.0M108.0 110.6V118.6M109.0 111.1V115.6M110.0 110.4V116.4M111.0 109.3V118.7M112.0 110.0V118.6M113.0 110.2V120.9M114.0 111.7V120.5M115.0 112.2V122.2M116.0 112.7V121.3M117.0 117.9V121.9M118.0 117.3V123.2M119.0 115.3V123.2M120.0 117.9V125.0M121.0 117.6V126.1M122.0 122.3V127.8M123.0 123.7V129.3M124.0 120.4V128.9M125.0 120.1V130.1M126.0 121.9V128.9M127.0 119.6V128.7M128.0 119.6V125.6M129.0 120.1V130.4M130.0 121.7V129.8M131.0 121.5V127.5M132.0 123.2V131.4M133.0 122.5V131.6M134.0 122.8V131.2M135.0 127.1V131.7M136.0 127.3V133.3M137.0 125.2V134.4M138.0 127.7V134.2M139.0 126.6V135.3M140.0 126.1V134.5M141.0 129.9V135.2M142.0 125.3V131.2M143.0 125.3V134.6M144.0 128.1V134.0M145.0 129.2V135.0M146.0 127.5V136.1M147.0 127.0V132.6M148.0 127.7V137.5M149.0 126.3V133.2M150.0 127.6V135.5M151.0 127.7V136.2M152.0 126.5V136.5M153.0 127.5V136.7M154.0 127.8V135.9M155.0 127.3V136.6M156.0 128.0V135.6M157.0 128.3V136.1M158.0 128.4V138.5M159.0 128.5V137.8M160.0 128.6V137.3M161.0 130.7V138.1M162.0 129.4V135.1M163.0 128.7V135.3M164.0 128.7V139.0M165.0 128.6V137.6M166.0 128.6V138.3M167.0 129.4V138.8M168.0 133.4V140.4M169.0 130.1V136.5M170.0 132.9V140.5M171.0 134.4V140.9M172.0 131.8V139.3M173.0 132.0V141.6M174.0 137.0V142.1M175.0 135.7V142.0M176.0 133.0V142.1M177.0 136.6V143.8M178.0 134.9V144.5M179.0 135.3V144.1M180.0 135.0V139.9M181.0 133.8V143.5M182.0 135.4V144.5M183.0 134.8V142.5M184.0 135.6V141.8M185.0 136.3V144.2M186.0 137.6V143.8M187.0 135.8V145.4M188.0 140.7V145.8M189.0 138.0V144.5M190.0 135.9V143.7M191.0 136.9V145.4M192.0 135.8V145.3M193.0 138.1V145.6M194.0 135.1V145.1M195.0 136.4V141.0M196.0 135.0V145.4M197.0 135.4V144.9M198.0 135.6V144.5M199.0 135.3V145.5M200.0 135.6V144.4M201.0 134.8V144.2M202.0 135.6V145.7M203.0 139.4V145.6M204.0 138.0V146.8M205.0 137.8V147.2M206.0 137.0V146.7M207.0 136.9V141.5M208.0 136.8V146.9M209.0 140.5V147.1M210.0 137.6V143.4M211.0 137.2V147.0M212.0 135.6V145.6M213.0 136.7V145.2M214.0 136.3V146.0M215.0 135.8V143.0M216.0 140.3V145.9M217.0 136.5V145.8M218.0 136.5V146.8M219.0 137.1V147.0M220.0 142.5V146.2M221.0 138.2V148.2M222.0 139.6V148.9M223.0 142.1V149.0M224.0 139.4V149.2M225.0 140.2V150.7M226.0 141.7V150.0M227.0 140.6V147.9M228.0 141.3V150.6M229.0 141.0V150.4M230.0 146.4V151.5M231.0 143.0V152.3M232.0 143.4V152.9M233.0 143.9V148.7M234.0 144.2V151.9M235.0 145.7V151.3M236.0 145.5V151.0M237.0 141.0V151.4M238.0 142.3V152.8M239.0 142.9V153.1M240.0 143.2V151.4M241.0 142.7V152.5M242.0 144.6V151.4M243.0 141.8V147.1M244.0 142.8V151.6M245.0 142.0V149.9M246.0 142.4V150.7M247.0 144.3V148.9M248.0 143.6V153.4M249.0 146.6V153.3M250.0 148.2V155.7M251.0 147.7V154.7M252.0 146.2V154.7M253.0 149.9V156.2M254.0 148.6V155.6M255.0 149.4V159.1M256.0 154.3V161.2M257.0 154.9V161.8M258.0 152.1V162.0M259.0 151.7V161.1M260.0 156.9V161.5M261.0 153.0V159.9M262.0 152.5V162.4M263.0 153.3V162.9M264.0 153.4V163.2M265.0 152.7V158.2M266.0 153.6V163.7M267.0 154.0V163.3M268.0 155.0V164.0M269.0 155.1V160.2M270.0 160.1V164.3M271.0 155.3V164.6M272.0 156.4V164.5M273.0 162.5V167.2M274.0 159.6V167.4M275.0 161.1V170.6M276.0 162.0V169.6M277.0 164.6V173.8M278.0 167.9V176.4M279.0 165.9V175.2M280.0 165.5V174.2M281.0 164.5V169.3M282.0 164.1V173.3M283.0 163.3V168.5M284.0 167.5V172.7M285.0 163.3V172.7M286.0 166.8V172.2M287.0 161.1V171.3M288.0 160.2V169.8M289.0 160.3V169.1M290.0 159.7V166.0M291.0 159.6V169.4M292.0 159.8V169.6M293.0 160.0V169.4M294.0 160.2V170.7M295.0 160.1V169.8M296.0 160.4V169.2M297.0 160.0V168.6M298.0 160.1V169.5M299.0 159.3V169.1M300.0 160.0V164.7M301.0 159.9V169.4M302.0 163.0V169.7M303.0 161.3V169.9M304.0 162.1V171.7M305.0 163.2V171.8M306.0 163.0V171.6M307.0 162.9V172.8M308.0 164.3V173.8M309.0 164.9V174.9M310.0 170.0V175.8M311.0 166.6V175.8M312.0 166.9V176.9M313.0 168.6V175.2M314.0 168.7V177.6M315.0 169.5V179.1M316.0 174.5V179.7M317.0 170.0V176.4M318.0 171.7V177.7M319.0 172.5V181.8M320.0 172.8V183.2M321.0 176.7V184.1M322.0 176.8V183.4M323.0 174.6V185.0M324.0 175.2V184.7M325.0 175.2V183.4M326.0 174.7V184.6M327.0 176.3V182.9M328.0 173.7V183.0M329.0 173.7V183.1M330.0 176.8V183.1M331.0 173.6V182.9M332.0 173.0V182.2M333.0 174.3V183.1M334.0 175.5V182.1M335.0 177.4V185.8M336.0 176.8V186.3M337.0 176.6V182.2M338.0 177.0V187.3M339.0 178.0V182.0M340.0 179.8V189.2M341.0 181.2V190.3M342.0 182.8V190.3M343.0 181.3V190.1M344.0 181.5V190.3M345.0 181.9V191.4M346.0 182.0V191.3M347.0 183.8V192.3M348.0 184.3V192.7M349.0 184.4V191.9M350.0 184.3V192.1M351.0 182.9V191.4M352.0 183.7V192.8M353.0 184.0V193.4M354.0 186.5V193.7M355.0 183.7V193.2M356.0 184.3V192.8M357.0 183.3V191.7M358.0 182.2V191.1M359.0 181.8V188.9M360.0 180.4V188.8M361.0 180.6V189.3M362.0 181.0V190.1M363.0 179.4V189.0M364.0 180.6V188.4M365.0 180.6V189.3M366.0 184.1V188.9M367.0 180.3V186.2M368.0 179.7V189.0M369.0 178.5V188.8M370.0 180.0V189.2M371.0 178.7V183.9M372.0 180.0V187.7M373.0 177.7V187.8M374.0 179.5V187.4M375.0 177.7V182.8M376.0 179.0V188.3M377.0 179.7V187.2M378.0 178.3V188.2M379.0 178.6V187.4M380.0 178.5V188.2M381.0 177.1V187.6M382.0 176.7V186.0M383.0 176.5V186.9M384.0 175.7V185.1M385.0 176.4V186.1M386.0 176.2V185.2M387.0 179.8V185.8M388.0 177.1V185.1M389.0 180.6V185.6M390.0 176.0V185.0M391.0 178.5V183.8M392.0 175.0V183.2M393.0 173.2V178.4M394.0 176.4V182.4M395.0 172.6V179.3M396.0 176.0V182.6M397.0 173.7V182.2M398.0 176.9V181.4M399.0 173.3V179.8M400.0 174.2V181.5M401.0 172.8V178.0M402.0 176.2V180.7M403.0 170.0V180.4M404.0 169.8V178.2M405.0 168.4V177.4M406.0 172.6V178.9M407.0 168.7V178.8M408.0 169.1V177.8M409.0 170.4V178.9M410.0 169.1V177.7M411.0 174.1V178.1M412.0 170.0V179.1M413.0 171.6V178.7M414.0 167.9V176.8M415.0 168.8V176.8M416.0 168.6V178.0M417.0 167.9V176.9M418.0 166.6V176.0M419.0 167.6V176.7M420.0 166.6V172.8M421.0 166.0V174.4M422.0 166.7V177.2M423.0 167.3V176.6M424.0 166.3V172.8M425.0 165.4V175.0M426.0 168.6V174.7M427.0 164.7V174.2M428.0 164.9V174.4M429.0 165.5V175.5M430.0 165.7V174.2M431.0 165.3V174.2M432.0 164.3V173.3M433.0 161.5V169.7M434.0 159.3V167.4M435.0 160.4V166.0M436.0 154.8V164.2M437.0 154.7V163.9M438.0 154.1V162.8M439.0 151.8V161.5M440.0 150.9V158.7M441.0 148.6V157.2M442.0 147.8V156.7M443.0 146.5V155.8M444.0 147.2V156.5M445.0 146.6V155.6M446.0 147.8V156.0M447.0 147.7V157.3M448.0 148.2V157.3M449.0 148.7V157.1M450.0 147.6V157.2M451.0 146.6V155.1M452.0 146.2V155.9M453.0 146.2V156.0M454.0 144.4V153.8M455.0 145.0V155.5M456.0 145.5V151.4M457.0 144.2V153.4M458.0 148.6V154.3M459.0 144.7V152.8M460.0 145.1V153.6M461.0 144.1V153.1M462.0 142.5V151.8M463.0 141.8V151.5M464.0 141.1V150.2M465.0 141.4V148.4M466.0 141.4V150.8M467.0 141.7V151.5M468.0 138.5V149.1M469.0 138.8V147.2M470.0 137.8V145.9M471.0 135.9V146.0M472.0 135.6V140.2M473.0 134.5V144.4M474.0 134.1V144.4M475.0 136.6V141.9M476.0 132.9V136.7M477.0 132.4V138.8M478.0 131.5V139.5M479.0 129.9V138.6M480.0 129.4V134.6M481.0 127.8V137.6M482.0 127.5V137.1M483.0 126.4V135.8M484.0 124.7V134.6M485.0 123.8V131.4M486.0 123.2V133.2M487.0 125.5V131.0M488.0 121.1V130.7M489.0 119.2V126.9M490.0 120.6V126.7M491.0 117.3V126.0M492.0 116.5V125.3M493.0 119.6V123.9M494.0 112.3V122.8M495.0 110.5V116.1M496.0 110.5V119.2M497.0 108.3V118.9M498.0 107.0V116.3M499.0 105.0V113.7M500.0 103.4V111.4M501.0 101.5V111.3M502.0 100.4V110.1M503.0 99.4V109.5M504.0 99.6V108.6M505.0 99.8V107.8M506.0 97.3V103.1M507.0 99.2V106.0M508.0 94.3V99.9" stroke="#90b854" stroke-width="1.15"/>
</g>
<rect x="52.5" y="37.5" width="455.0" height="285.0" fill="none" stroke="#a4a4a4" stroke-width="1"/>
<path d="M64.57 320.0V325.0M64.57 37.5v2.5M89.54 320.0V325.0M89.54 37.5v2.5M114.50 319.5V327.5M114.50 37.5v4M139.46 320.0V325.0M139.46 37.5v2.5M164.42 320.0V325.0M164.42 37.5v2.5M189.39 320.0V325.0M189.39 37.5v2.5M214.35 319.5V327.5M214.35 37.5v4M239.31 320.0V325.0M239.31 37.5v2.5M264.27 320.0V325.0M264.27 37.5v2.5M289.24 320.0V325.0M289.24 37.5v2.5M314.20 319.5V327.5M314.20 37.5v4M339.16 320.0V325.0M339.16 37.5v2.5M364.12 320.0V325.0M364.12 37.5v2.5M389.09 320.0V325.0M389.09 37.5v2.5M414.05 319.5V327.5M414.05 37.5v4M439.01 320.0V325.0M439.01 37.5v2.5M463.97 320.0V325.0M463.97 37.5v2.5M488.94 320.0V325.0M488.94 37.5v2.5M50.0 314.68H55.0M507.5 314.68h-2.5M48.0 301.20H56.0M507.5 301.20h-4M50.0 287.72H55.0M507.5 287.72h-2.5M50.0 274.25H55.0M507.5 274.25h-2.5M50.0 260.77H55.0M507.5 260.77h-2.5M48.0 247.30H56.0M507.5 247.30h-4M50.0 233.82H55.0M507.5 233.82h-2.5M50.0 220.35H55.0M507.5 220.35h-2.5M50.0 206.88H55.0M507.5 206.88h-2.5M48.0 193.40H56.0M507.5 193.40h-4M50.0 179.93H55.0M507.5 179.93h-2.5M50.0 166.45H55.0M507.5 166.45h-2.5M50.0 152.97H55.0M507.5 152.97h-2.5M48.0 139.50H56.0M507.5 139.50h-4M50.0 126.03H55.0M507.5 126.03h-2.5M50.0 112.55H55.0M507.5 112.55h-2.5M50.0 99.07H55.0M507.5 99.07h-2.5M48.0 85.60H56.0M507.5 85.60h-4M50.0 72.12H55.0M507.5 72.12h-2.5M50.0 58.65H55.0M507.5 58.65h-2.5M50.0 45.18H55.0M507.5 45.18h-2.5" stroke="#a4a4a4" stroke-width="1" fill="none"/>
<g fill="#b4b4b4" font-size="12">
<text x="38.5" y="305.5" text-anchor="end">0</text>
<text x="38.5" y="251.6" text-anchor="end">2</text>
<text x="38.5" y="197.7" text-anchor="end">4</text>
<text x="38.5" y="143.8" text-anchor="end">6</text>
<text x="38.5" y="89.9" text-anchor="end">8</text>
<text x="114.5" y="342.2" text-anchor="middle" textLength="60" lengthAdjust="spacingAndGlyphs">2025-10-03</text>
<text x="114.5" y="355.2" text-anchor="middle">02:00</text>
<text x="214.4" y="342.2" text-anchor="middle" textLength="60" lengthAdjust="spacingAndGlyphs">2025-10-03</text>
<text x="214.4" y="355.2" text-anchor="middle">04:00</text>
<text x="314.2" y="342.2" text-anchor="middle" textLength="60" lengthAdjust="spacingAndGlyphs">2025-10-03</text>
<text x="314.2" y="355.2" text-anchor="middle">06:00</text>
<text x="414.0" y="342.2" text-anchor="middle" textLength="60" lengthAdjust="spacingAndGlyphs">2025-10-03</text>
<text x="414.0" y="355.2" text-anchor="middle">08:00</text>
</g>
<text x="279.5" y="373.8" text-anchor="middle" font-size="12" font-weight="bold" fill="#c4c4c4" textLength="60.5" lengthAdjust="spacingAndGlyphs">Local Time</text>
<text transform="translate(17.80000000000001,179.5) rotate(-90)" text-anchor="middle" font-size="12" font-weight="bold" fill="#c4c4c4" textLength="93.5" lengthAdjust="spacingAndGlyphs">Temperature (°C)</text>
<g font-size="10" fill="#b8b8b8">
<line x1="55" x2="78" y1="14.8" y2="14.8" stroke="#3d9af5" stroke-width="5.5"/>
<text x="85" y="18.4">Fans</text>
<line x1="55" x2="78" y1="26.3" y2="26.3" stroke="#7f9a4a" stroke-width="1.2"/>
<text x="85" y="29.9">Secondary mirror</text>
<line x1="170" x2="193" y1="14.8" y2="14.8" stroke="#ff0000" stroke-width="5.5"/>
<text x="200" y="18.4">Heater</text>
<line x1="170" x2="193" y1="26.3" y2="26.3" stroke="#c08070" stroke-width="1.2"/>
<text x="200" y="29.9">Backplate</text>
<line x1="284.5" x2="307.5" y1="14.8" y2="14.8" stroke="#b070d8" stroke-width="1.2"/>
<text x="314.5" y="18.4">Ambient</text>
<line x1="284.5" x2="307.5" y1="26.3" y2="26.3" stroke="#b8a838" stroke-width="1.2"/>
<text x="314.5" y="29.9">Primary mirror</text>
</g>
</svg>
<div class="abs" style="left:260px;top:497px;width:540px;height:21px;background:#202020"></div>
<div class="sb" style="left:1.5px;width:75.5px;background:#006a00;color:#fff"><span class="t">Focuser1: 6612</span></div>
<div class="sb" style="left:79px;width:59px;background:#006a00;color:#fff"><span class="t">Temp: 7,6C</span></div>
<div class="sb" style="left:141px;width:55px;background:#00008b;color:#fff"><span class="t">Fans: OFF</span></div>
<div class="sb" style="left:198.5px;width:60.5px;background:#dfa828;color:#fff"><span class="t">Sun: 25,82°</span></div>
</div>
</body></html>
